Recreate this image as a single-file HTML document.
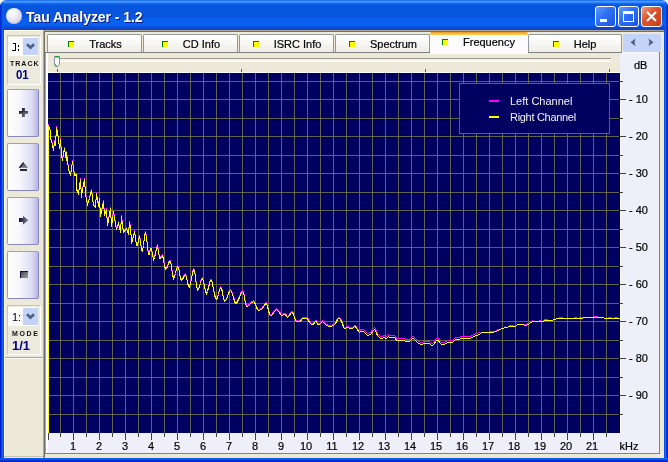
<!DOCTYPE html>
<html><head><meta charset="utf-8"><style>
*{box-sizing:border-box}
html,body{margin:0;padding:0;width:668px;height:462px;overflow:hidden;background:#fff;font-family:"Liberation Sans", sans-serif}
.a{position:absolute}
#title{position:absolute;left:0;top:0;width:668px;height:30px;border-radius:6px 6px 0 0;
background:linear-gradient(180deg,#0a5ae6 0px,#3d95ff 1px,#4f9dff 2px,#1f74f6 3px,#0a5fe8 4px,#0855dd 6px,#0855dd 16px,#0860f0 20px,#0862f4 25px,#0a4fd8 27px,#0a48d0 28px,#1640c8 29px,#1640c8 30px)}
#ttext{position:absolute;left:26px;top:9px;font-weight:bold;font-size:14px;line-height:16px;color:#fff;text-shadow:1px 1px 0 #0a1883;letter-spacing:-0.05px;white-space:nowrap}
#ticon{position:absolute;left:6px;top:8px;width:16px;height:16px;border-radius:50%;background:radial-gradient(circle at 40% 35%,#ffffff 0%,#eeeef8 35%,#c8c8dc 80%,#9ea4c8 100%)}
.tb{position:absolute;top:6px;width:21px;height:21px;border:1px solid #fff;border-radius:3px;background:linear-gradient(135deg,#5a9cff 0%,#2f6ef2 45%,#1c55e0 100%)}
#bclose{background:linear-gradient(135deg,#f0a080 0%,#e0562c 40%,#c83a1a 100%)}
.lb{position:absolute;top:30px;height:432px;width:4px;background:linear-gradient(90deg,#0020d0 0,#0020d0 1px,#0838e0 1px,#0838e0 2px,#1f62f0 2px,#1f62f0 3px,#0852e8 3px)}
#client{position:absolute;left:4px;top:30px;width:660px;height:428px;background:#ece9d8}
.panel{position:absolute;left:7px;width:34px;border:1px solid #c9c5b3;border-right-color:#fff;border-bottom-color:#fff;background:#eceadc}
.combo{position:absolute;left:8px;width:30px;height:19px;background:#fff}
.dd{position:absolute;left:15px;top:1px;width:15px;height:17px;background:#c4d3fa}
.small{position:absolute;font-weight:bold;font-size:7px;line-height:7px;color:#111;letter-spacing:0.9px;white-space:nowrap}
.big{position:absolute;font-weight:bold;font-size:13px;line-height:14px;color:#000080;white-space:nowrap;transform:scaleX(0.88);transform-origin:0 0}
.pb{position:absolute;left:7px;width:32px;height:48px;border:1px solid #9aa2bc;border-right-color:#8484c0;border-bottom-color:#8888b8;border-radius:2px;background:linear-gradient(90deg,#ffffff 0%,#f6f6fc 40%,#dcdcf4 80%,#c4c4e8 92%,#b8b8e0 100%)}
.tab{position:absolute;top:34px;height:19px;border:1px solid #919b9c;border-bottom:none;border-radius:2px 2px 0 0;background:linear-gradient(180deg,#ffffff 0%,#f8f8f5 40%,#ecebe5 100%);display:flex;justify-content:center;align-items:center;padding-top:0px;font-size:11px;color:#000}
.tab.sel{top:32px;height:22px;border:none;background:linear-gradient(180deg,#e8902c 0px,#f8b038 1px,#ffc83c 2px,#ffd050 3px,#fcfcfe 3px);padding-top:3px;padding-bottom:5px;padding-right:2px;z-index:2}
.tab.help{padding-right:2px}
.tab span{display:block;line-height:13px;-webkit-text-stroke:0.2px #000}
.ti{position:relative;left:1px;width:6px;height:6px;border-left:1px solid #008000;border-top:1px solid #008000;background:#ffff00;margin-right:16px}
.xl{position:absolute;top:440px;width:30px;text-align:center;font-size:11px;line-height:12px;color:#000;-webkit-text-stroke:0.2px #000}
.yl{position:absolute;left:629px;font-size:11px;line-height:14px;color:#000;white-space:nowrap;-webkit-text-stroke:0.2px #000}
.leg{position:absolute;left:510px;font-size:11px;line-height:12px;color:#f4f4f4;white-space:nowrap}
</style></head><body><div id="root" style="position:absolute;left:0;top:0;width:668px;height:462px;will-change:transform">
<div id="title"></div>
<div class="a" style="left:0;top:5px;width:4px;height:25px;background:linear-gradient(90deg,#0028c8 0,#0030d8 1px,#0a50e8 2px,#1060f0 3px,rgba(16,96,240,0) 4px)"></div>
<div class="a" style="left:664px;top:5px;width:4px;height:25px;background:linear-gradient(270deg,#0020b8 0,#0030d0 1px,#0a50e8 2px,#1060f0 3px,rgba(16,96,240,0) 4px)"></div>
<div id="ticon"></div>
<div id="ttext">Tau Analyzer - 1.2</div>
<div class="tb" style="left:595px"><div class="a" style="left:4px;top:12px;width:7px;height:3px;background:#fff"></div></div>
<div class="tb" style="left:618px"><div class="a" style="left:4px;top:4px;width:11px;height:11px;border:1px solid #fff;border-top-width:3px"></div></div>
<div class="tb" id="bclose" style="left:641px"><svg class="a" style="left:4px;top:4px" width="11" height="11"><path d="M1 1 L10 10 M10 1 L1 10" stroke="#fff" stroke-width="2"/></svg></div>
<div class="lb" style="left:0"></div>
<div class="lb" style="left:664px;transform:scaleX(-1)"></div>
<div class="a" style="left:0;top:458px;width:668px;height:4px;background:linear-gradient(180deg,#0852e8,#1f62f0 25%,#0838e0 50%,#0020d0 100%)"></div>
<div id="client"></div>
<!-- left panel -->
<div class="panel" style="top:35px;height:50px"></div>
<div class="combo" style="top:37px"><div class="dd"><svg class="a" style="left:3px;top:5px" width="9" height="7"><path d="M1 1.2 L4.5 4.7 L8 1.2" stroke="#4d6185" stroke-width="2.7" fill="none"/></svg></div></div>
<div class="a" style="left:13px;top:43px;width:3px;height:1px;background:#000"></div><div class="a" style="left:15px;top:43px;width:1px;height:8px;background:#000"></div><div class="a" style="left:12px;top:50px;width:4px;height:1px;background:#000"></div><div class="a" style="left:18px;top:45px;width:1px;height:2px;background:#000"></div><div class="a" style="left:18px;top:49px;width:1px;height:2px;background:#000"></div>
<div class="small" style="left:10px;top:60px;letter-spacing:1.0px">TRACK</div>
<div class="big" style="left:16px;top:68px">01</div>
<div class="pb" style="top:89px"><svg class="a" style="left:11px;top:18px" width="10" height="10" shape-rendering="crispEdges"><defs><linearGradient id="gi" x1="0" y1="0" x2="1" y2="1"><stop offset="0" stop-color="#101030"/><stop offset="1" stop-color="#808080"/></linearGradient></defs><rect x="3" y="0" width="3" height="9" fill="url(#gi)"/><rect x="0" y="3" width="9" height="3" fill="url(#gi)"/></svg></div>
<div class="pb" style="top:143px"><svg class="a" style="left:11px;top:18px" width="10" height="10"><polygon points="0,5.8 4.5,0.3 9,5.8" fill="#6a6a6a"/><path d="M0.3,5.8 L4.5,0.6" stroke="#101030" stroke-width="1.3"/><rect x="1" y="7" width="7" height="2" fill="#2a2a2a"/></svg></div>
<div class="pb" style="top:197px"><svg class="a" style="left:11px;top:18px" width="10" height="10"><defs><linearGradient id="ga" x1="0" y1="0" x2="1" y2="0"><stop offset="0" stop-color="#0a0a40"/><stop offset="1" stop-color="#8a8a8a"/></linearGradient></defs><polygon points="0,2 4,2 4,0 9.5,4.2 4,8.5 4,6 0,6" fill="url(#ga)"/></svg></div>
<div class="pb" style="top:251px"><svg class="a" style="left:12px;top:19px" width="8" height="7" shape-rendering="crispEdges"><defs><linearGradient id="gs" x1="0" y1="0" x2="1" y2="1"><stop offset="0" stop-color="#404040"/><stop offset="1" stop-color="#a0a0a0"/></linearGradient></defs><rect x="0" y="0" width="8" height="7" fill="url(#gs)"/><rect x="0" y="0" width="8" height="1" fill="#101040"/><rect x="0" y="0" width="1" height="7" fill="#101040"/></svg></div>
<div class="panel" style="top:305px;height:50px"></div>
<div class="a" style="left:4px;top:357px;width:39px;height:1px;background:#aca899"></div>
<div class="a" style="left:4px;top:358px;width:39px;height:1px;background:#fbfaf4"></div>
<div class="combo" style="top:307px"><div class="dd"><svg class="a" style="left:3px;top:5px" width="9" height="7"><path d="M1 1.2 L4.5 4.7 L8 1.2" stroke="#4d6185" stroke-width="2.7" fill="none"/></svg></div></div>
<div class="a" style="left:12px;top:311px;font-size:11px;line-height:13px;color:#000">1:</div>
<div class="small" style="left:12px;top:330px;letter-spacing:1.6px">MODE</div>
<div class="big" style="left:12px;top:339px;transform:scaleX(1.0)">1/1</div>
<!-- right container edges -->
<div class="a" style="left:4px;top:30px;width:39px;height:1px;background:#fffdf6"></div>
<div class="a" style="left:4px;top:30px;width:1px;height:427px;background:#fff8ea"></div>
<div class="a" style="left:4px;top:456px;width:39px;height:1px;background:#c8c4b0"></div>
<div class="a" style="left:43px;top:30px;width:621px;height:1px;background:#aca899"></div>
<div class="a" style="left:44px;top:31px;width:620px;height:1px;background:#716f64"></div>
<div class="a" style="left:43px;top:30px;width:1px;height:428px;background:#aca899"></div>
<div class="a" style="left:44px;top:31px;width:1px;height:427px;background:#716f64"></div>
<!-- tabs -->
<div class="tab" style="left:47px;width:95px"><div class="ti"></div><span>Tracks</span></div>
<div class="tab" style="left:143px;width:95px"><div class="ti"></div><span>CD Info</span></div>
<div class="tab" style="left:239px;width:95px"><div class="ti"></div><span>ISRC Info</span></div>
<div class="tab" style="left:335px;width:95px"><div class="ti"></div><span>Spectrum</span></div>
<div class="tab help" style="left:528px;width:94px"><div class="ti"></div><span>Help</span></div>
<div class="tab sel" style="left:430px;width:98px"><div class="ti"></div><span>Frequency</span></div>
<!-- page -->
<div class="a" style="left:44px;top:52px;width:616px;height:402px;background:#efeff9;border:1px solid #808080;border-left:1px solid #6e6e6e"></div>
<div class="a" style="left:45px;top:53px;width:1px;height:400px;background:#a4a4a8"></div>
<div class="a" style="left:46px;top:53px;width:2px;height:400px;background:#fff"></div>
<div class="a" style="left:48px;top:53px;width:572px;height:19px;background:#ece9d8"></div>
<div class="a" style="left:48px;top:72px;width:572px;height:1px;background:#fff"></div>
<div class="a" style="left:623px;top:34px;width:38px;height:18px;background:#c4d3fa;border-radius:2px"></div>
<div class="a" style="left:622px;top:52px;width:37px;height:1px;background:#f6f6fc"></div>
<div class="a" style="left:60px;top:58px;width:551px;height:1px;background:#9d9a8c"></div>
<div class="a" style="left:60px;top:59px;width:551px;height:2px;background:#f4f3ee"></div>
<div class="a" style="left:60px;top:61px;width:551px;height:1px;background:#ffffff"></div>
<svg class="a" style="left:54px;top:56px" width="6" height="12"><polygon points="0.5,0.5 5.5,0.5 5.5,8.5 3,11 0.5,8.5" fill="#fcfcfe" stroke="#8a8aa0" stroke-width="1"/><rect x="1" y="0" width="4" height="1.5" fill="#21a121"/><path d="M0.8,8.5 L2.5,10.5" stroke="#21a121" stroke-width="1.2"/></svg>
<div class="a" style="left:57px;top:69px;width:1px;height:3px;background:#606060"></div>
<div class="a" style="left:609px;top:69px;width:1px;height:3px;background:#606060"></div>
<div class="a" style="left:241px;top:69px;width:1px;height:3px;background:#606060"></div>
<div class="a" style="left:425px;top:69px;width:1px;height:3px;background:#606060"></div>
<svg class="a" style="left:623px;top:34px" width="38" height="18"><polygon points="12.5,4.5 7.5,8.3 12.5,12.2 11.5,8.3" fill="#4d6185"/><polygon points="25.5,4.5 30.5,8.3 25.5,12.2 26.5,8.3" fill="#4d6185"/></svg>
<svg width="668" height="462" style="position:absolute;left:0;top:0" shape-rendering="crispEdges">
<rect x="48" y="73" width="572" height="360" fill="#000060"/>
<rect x="60" y="73" width="1" height="360" fill="#626250"/>
<rect x="73" y="73" width="1" height="360" fill="#626250"/>
<rect x="86" y="73" width="1" height="360" fill="#626250"/>
<rect x="99" y="73" width="1" height="360" fill="#626250"/>
<rect x="112" y="73" width="1" height="360" fill="#626250"/>
<rect x="125" y="73" width="1" height="360" fill="#626250"/>
<rect x="138" y="73" width="1" height="360" fill="#626250"/>
<rect x="151" y="73" width="1" height="360" fill="#626250"/>
<rect x="164" y="73" width="1" height="360" fill="#626250"/>
<rect x="177" y="73" width="1" height="360" fill="#626250"/>
<rect x="190" y="73" width="1" height="360" fill="#626250"/>
<rect x="203" y="73" width="1" height="360" fill="#626250"/>
<rect x="216" y="73" width="1" height="360" fill="#626250"/>
<rect x="229" y="73" width="1" height="360" fill="#626250"/>
<rect x="242" y="73" width="1" height="360" fill="#626250"/>
<rect x="255" y="73" width="1" height="360" fill="#626250"/>
<rect x="268" y="73" width="1" height="360" fill="#626250"/>
<rect x="281" y="73" width="1" height="360" fill="#626250"/>
<rect x="294" y="73" width="1" height="360" fill="#626250"/>
<rect x="307" y="73" width="1" height="360" fill="#626250"/>
<rect x="320" y="73" width="1" height="360" fill="#626250"/>
<rect x="333" y="73" width="1" height="360" fill="#626250"/>
<rect x="346" y="73" width="1" height="360" fill="#626250"/>
<rect x="359" y="73" width="1" height="360" fill="#626250"/>
<rect x="372" y="73" width="1" height="360" fill="#626250"/>
<rect x="385" y="73" width="1" height="360" fill="#626250"/>
<rect x="398" y="73" width="1" height="360" fill="#626250"/>
<rect x="411" y="73" width="1" height="360" fill="#626250"/>
<rect x="424" y="73" width="1" height="360" fill="#626250"/>
<rect x="437" y="73" width="1" height="360" fill="#626250"/>
<rect x="450" y="73" width="1" height="360" fill="#626250"/>
<rect x="463" y="73" width="1" height="360" fill="#626250"/>
<rect x="476" y="73" width="1" height="360" fill="#626250"/>
<rect x="489" y="73" width="1" height="360" fill="#626250"/>
<rect x="502" y="73" width="1" height="360" fill="#626250"/>
<rect x="515" y="73" width="1" height="360" fill="#626250"/>
<rect x="528" y="73" width="1" height="360" fill="#626250"/>
<rect x="541" y="73" width="1" height="360" fill="#626250"/>
<rect x="554" y="73" width="1" height="360" fill="#626250"/>
<rect x="567" y="73" width="1" height="360" fill="#626250"/>
<rect x="580" y="73" width="1" height="360" fill="#626250"/>
<rect x="593" y="73" width="1" height="360" fill="#626250"/>
<rect x="606" y="73" width="1" height="360" fill="#626250"/>
<rect x="48" y="81" width="572" height="1" fill="#626250"/>
<rect x="48" y="99" width="572" height="1" fill="#626250"/>
<rect x="48" y="118" width="572" height="1" fill="#626250"/>
<rect x="48" y="136" width="572" height="1" fill="#626250"/>
<rect x="48" y="155" width="572" height="1" fill="#626250"/>
<rect x="48" y="173" width="572" height="1" fill="#626250"/>
<rect x="48" y="192" width="572" height="1" fill="#626250"/>
<rect x="48" y="210" width="572" height="1" fill="#626250"/>
<rect x="48" y="229" width="572" height="1" fill="#626250"/>
<rect x="48" y="247" width="572" height="1" fill="#626250"/>
<rect x="48" y="266" width="572" height="1" fill="#626250"/>
<rect x="48" y="284" width="572" height="1" fill="#626250"/>
<rect x="48" y="303" width="572" height="1" fill="#626250"/>
<rect x="48" y="321" width="572" height="1" fill="#626250"/>
<rect x="48" y="340" width="572" height="1" fill="#626250"/>
<rect x="48" y="358" width="572" height="1" fill="#626250"/>
<rect x="48" y="377" width="572" height="1" fill="#626250"/>
<rect x="48" y="395" width="572" height="1" fill="#626250"/>
<rect x="48" y="414" width="572" height="1" fill="#626250"/>
<rect x="60" y="81" width="1" height="1" fill="#727842"/>
<rect x="60" y="99" width="1" height="1" fill="#727842"/>
<rect x="60" y="118" width="1" height="1" fill="#727842"/>
<rect x="60" y="136" width="1" height="1" fill="#727842"/>
<rect x="60" y="155" width="1" height="1" fill="#727842"/>
<rect x="60" y="173" width="1" height="1" fill="#727842"/>
<rect x="60" y="192" width="1" height="1" fill="#727842"/>
<rect x="60" y="210" width="1" height="1" fill="#727842"/>
<rect x="60" y="229" width="1" height="1" fill="#727842"/>
<rect x="60" y="247" width="1" height="1" fill="#727842"/>
<rect x="60" y="266" width="1" height="1" fill="#727842"/>
<rect x="60" y="284" width="1" height="1" fill="#727842"/>
<rect x="60" y="303" width="1" height="1" fill="#727842"/>
<rect x="60" y="321" width="1" height="1" fill="#727842"/>
<rect x="60" y="340" width="1" height="1" fill="#727842"/>
<rect x="60" y="358" width="1" height="1" fill="#727842"/>
<rect x="60" y="377" width="1" height="1" fill="#727842"/>
<rect x="60" y="395" width="1" height="1" fill="#727842"/>
<rect x="60" y="414" width="1" height="1" fill="#727842"/>
<rect x="73" y="81" width="1" height="1" fill="#727842"/>
<rect x="73" y="99" width="1" height="1" fill="#727842"/>
<rect x="73" y="118" width="1" height="1" fill="#727842"/>
<rect x="73" y="136" width="1" height="1" fill="#727842"/>
<rect x="73" y="155" width="1" height="1" fill="#727842"/>
<rect x="73" y="173" width="1" height="1" fill="#727842"/>
<rect x="73" y="192" width="1" height="1" fill="#727842"/>
<rect x="73" y="210" width="1" height="1" fill="#727842"/>
<rect x="73" y="229" width="1" height="1" fill="#727842"/>
<rect x="73" y="247" width="1" height="1" fill="#727842"/>
<rect x="73" y="266" width="1" height="1" fill="#727842"/>
<rect x="73" y="284" width="1" height="1" fill="#727842"/>
<rect x="73" y="303" width="1" height="1" fill="#727842"/>
<rect x="73" y="321" width="1" height="1" fill="#727842"/>
<rect x="73" y="340" width="1" height="1" fill="#727842"/>
<rect x="73" y="358" width="1" height="1" fill="#727842"/>
<rect x="73" y="377" width="1" height="1" fill="#727842"/>
<rect x="73" y="395" width="1" height="1" fill="#727842"/>
<rect x="73" y="414" width="1" height="1" fill="#727842"/>
<rect x="86" y="81" width="1" height="1" fill="#727842"/>
<rect x="86" y="99" width="1" height="1" fill="#727842"/>
<rect x="86" y="118" width="1" height="1" fill="#727842"/>
<rect x="86" y="136" width="1" height="1" fill="#727842"/>
<rect x="86" y="155" width="1" height="1" fill="#727842"/>
<rect x="86" y="173" width="1" height="1" fill="#727842"/>
<rect x="86" y="192" width="1" height="1" fill="#727842"/>
<rect x="86" y="210" width="1" height="1" fill="#727842"/>
<rect x="86" y="229" width="1" height="1" fill="#727842"/>
<rect x="86" y="247" width="1" height="1" fill="#727842"/>
<rect x="86" y="266" width="1" height="1" fill="#727842"/>
<rect x="86" y="284" width="1" height="1" fill="#727842"/>
<rect x="86" y="303" width="1" height="1" fill="#727842"/>
<rect x="86" y="321" width="1" height="1" fill="#727842"/>
<rect x="86" y="340" width="1" height="1" fill="#727842"/>
<rect x="86" y="358" width="1" height="1" fill="#727842"/>
<rect x="86" y="377" width="1" height="1" fill="#727842"/>
<rect x="86" y="395" width="1" height="1" fill="#727842"/>
<rect x="86" y="414" width="1" height="1" fill="#727842"/>
<rect x="99" y="81" width="1" height="1" fill="#727842"/>
<rect x="99" y="99" width="1" height="1" fill="#727842"/>
<rect x="99" y="118" width="1" height="1" fill="#727842"/>
<rect x="99" y="136" width="1" height="1" fill="#727842"/>
<rect x="99" y="155" width="1" height="1" fill="#727842"/>
<rect x="99" y="173" width="1" height="1" fill="#727842"/>
<rect x="99" y="192" width="1" height="1" fill="#727842"/>
<rect x="99" y="210" width="1" height="1" fill="#727842"/>
<rect x="99" y="229" width="1" height="1" fill="#727842"/>
<rect x="99" y="247" width="1" height="1" fill="#727842"/>
<rect x="99" y="266" width="1" height="1" fill="#727842"/>
<rect x="99" y="284" width="1" height="1" fill="#727842"/>
<rect x="99" y="303" width="1" height="1" fill="#727842"/>
<rect x="99" y="321" width="1" height="1" fill="#727842"/>
<rect x="99" y="340" width="1" height="1" fill="#727842"/>
<rect x="99" y="358" width="1" height="1" fill="#727842"/>
<rect x="99" y="377" width="1" height="1" fill="#727842"/>
<rect x="99" y="395" width="1" height="1" fill="#727842"/>
<rect x="99" y="414" width="1" height="1" fill="#727842"/>
<rect x="112" y="81" width="1" height="1" fill="#727842"/>
<rect x="112" y="99" width="1" height="1" fill="#727842"/>
<rect x="112" y="118" width="1" height="1" fill="#727842"/>
<rect x="112" y="136" width="1" height="1" fill="#727842"/>
<rect x="112" y="155" width="1" height="1" fill="#727842"/>
<rect x="112" y="173" width="1" height="1" fill="#727842"/>
<rect x="112" y="192" width="1" height="1" fill="#727842"/>
<rect x="112" y="210" width="1" height="1" fill="#727842"/>
<rect x="112" y="229" width="1" height="1" fill="#727842"/>
<rect x="112" y="247" width="1" height="1" fill="#727842"/>
<rect x="112" y="266" width="1" height="1" fill="#727842"/>
<rect x="112" y="284" width="1" height="1" fill="#727842"/>
<rect x="112" y="303" width="1" height="1" fill="#727842"/>
<rect x="112" y="321" width="1" height="1" fill="#727842"/>
<rect x="112" y="340" width="1" height="1" fill="#727842"/>
<rect x="112" y="358" width="1" height="1" fill="#727842"/>
<rect x="112" y="377" width="1" height="1" fill="#727842"/>
<rect x="112" y="395" width="1" height="1" fill="#727842"/>
<rect x="112" y="414" width="1" height="1" fill="#727842"/>
<rect x="125" y="81" width="1" height="1" fill="#727842"/>
<rect x="125" y="99" width="1" height="1" fill="#727842"/>
<rect x="125" y="118" width="1" height="1" fill="#727842"/>
<rect x="125" y="136" width="1" height="1" fill="#727842"/>
<rect x="125" y="155" width="1" height="1" fill="#727842"/>
<rect x="125" y="173" width="1" height="1" fill="#727842"/>
<rect x="125" y="192" width="1" height="1" fill="#727842"/>
<rect x="125" y="210" width="1" height="1" fill="#727842"/>
<rect x="125" y="229" width="1" height="1" fill="#727842"/>
<rect x="125" y="247" width="1" height="1" fill="#727842"/>
<rect x="125" y="266" width="1" height="1" fill="#727842"/>
<rect x="125" y="284" width="1" height="1" fill="#727842"/>
<rect x="125" y="303" width="1" height="1" fill="#727842"/>
<rect x="125" y="321" width="1" height="1" fill="#727842"/>
<rect x="125" y="340" width="1" height="1" fill="#727842"/>
<rect x="125" y="358" width="1" height="1" fill="#727842"/>
<rect x="125" y="377" width="1" height="1" fill="#727842"/>
<rect x="125" y="395" width="1" height="1" fill="#727842"/>
<rect x="125" y="414" width="1" height="1" fill="#727842"/>
<rect x="138" y="81" width="1" height="1" fill="#727842"/>
<rect x="138" y="99" width="1" height="1" fill="#727842"/>
<rect x="138" y="118" width="1" height="1" fill="#727842"/>
<rect x="138" y="136" width="1" height="1" fill="#727842"/>
<rect x="138" y="155" width="1" height="1" fill="#727842"/>
<rect x="138" y="173" width="1" height="1" fill="#727842"/>
<rect x="138" y="192" width="1" height="1" fill="#727842"/>
<rect x="138" y="210" width="1" height="1" fill="#727842"/>
<rect x="138" y="229" width="1" height="1" fill="#727842"/>
<rect x="138" y="247" width="1" height="1" fill="#727842"/>
<rect x="138" y="266" width="1" height="1" fill="#727842"/>
<rect x="138" y="284" width="1" height="1" fill="#727842"/>
<rect x="138" y="303" width="1" height="1" fill="#727842"/>
<rect x="138" y="321" width="1" height="1" fill="#727842"/>
<rect x="138" y="340" width="1" height="1" fill="#727842"/>
<rect x="138" y="358" width="1" height="1" fill="#727842"/>
<rect x="138" y="377" width="1" height="1" fill="#727842"/>
<rect x="138" y="395" width="1" height="1" fill="#727842"/>
<rect x="138" y="414" width="1" height="1" fill="#727842"/>
<rect x="151" y="81" width="1" height="1" fill="#727842"/>
<rect x="151" y="99" width="1" height="1" fill="#727842"/>
<rect x="151" y="118" width="1" height="1" fill="#727842"/>
<rect x="151" y="136" width="1" height="1" fill="#727842"/>
<rect x="151" y="155" width="1" height="1" fill="#727842"/>
<rect x="151" y="173" width="1" height="1" fill="#727842"/>
<rect x="151" y="192" width="1" height="1" fill="#727842"/>
<rect x="151" y="210" width="1" height="1" fill="#727842"/>
<rect x="151" y="229" width="1" height="1" fill="#727842"/>
<rect x="151" y="247" width="1" height="1" fill="#727842"/>
<rect x="151" y="266" width="1" height="1" fill="#727842"/>
<rect x="151" y="284" width="1" height="1" fill="#727842"/>
<rect x="151" y="303" width="1" height="1" fill="#727842"/>
<rect x="151" y="321" width="1" height="1" fill="#727842"/>
<rect x="151" y="340" width="1" height="1" fill="#727842"/>
<rect x="151" y="358" width="1" height="1" fill="#727842"/>
<rect x="151" y="377" width="1" height="1" fill="#727842"/>
<rect x="151" y="395" width="1" height="1" fill="#727842"/>
<rect x="151" y="414" width="1" height="1" fill="#727842"/>
<rect x="164" y="81" width="1" height="1" fill="#727842"/>
<rect x="164" y="99" width="1" height="1" fill="#727842"/>
<rect x="164" y="118" width="1" height="1" fill="#727842"/>
<rect x="164" y="136" width="1" height="1" fill="#727842"/>
<rect x="164" y="155" width="1" height="1" fill="#727842"/>
<rect x="164" y="173" width="1" height="1" fill="#727842"/>
<rect x="164" y="192" width="1" height="1" fill="#727842"/>
<rect x="164" y="210" width="1" height="1" fill="#727842"/>
<rect x="164" y="229" width="1" height="1" fill="#727842"/>
<rect x="164" y="247" width="1" height="1" fill="#727842"/>
<rect x="164" y="266" width="1" height="1" fill="#727842"/>
<rect x="164" y="284" width="1" height="1" fill="#727842"/>
<rect x="164" y="303" width="1" height="1" fill="#727842"/>
<rect x="164" y="321" width="1" height="1" fill="#727842"/>
<rect x="164" y="340" width="1" height="1" fill="#727842"/>
<rect x="164" y="358" width="1" height="1" fill="#727842"/>
<rect x="164" y="377" width="1" height="1" fill="#727842"/>
<rect x="164" y="395" width="1" height="1" fill="#727842"/>
<rect x="164" y="414" width="1" height="1" fill="#727842"/>
<rect x="177" y="81" width="1" height="1" fill="#727842"/>
<rect x="177" y="99" width="1" height="1" fill="#727842"/>
<rect x="177" y="118" width="1" height="1" fill="#727842"/>
<rect x="177" y="136" width="1" height="1" fill="#727842"/>
<rect x="177" y="155" width="1" height="1" fill="#727842"/>
<rect x="177" y="173" width="1" height="1" fill="#727842"/>
<rect x="177" y="192" width="1" height="1" fill="#727842"/>
<rect x="177" y="210" width="1" height="1" fill="#727842"/>
<rect x="177" y="229" width="1" height="1" fill="#727842"/>
<rect x="177" y="247" width="1" height="1" fill="#727842"/>
<rect x="177" y="266" width="1" height="1" fill="#727842"/>
<rect x="177" y="284" width="1" height="1" fill="#727842"/>
<rect x="177" y="303" width="1" height="1" fill="#727842"/>
<rect x="177" y="321" width="1" height="1" fill="#727842"/>
<rect x="177" y="340" width="1" height="1" fill="#727842"/>
<rect x="177" y="358" width="1" height="1" fill="#727842"/>
<rect x="177" y="377" width="1" height="1" fill="#727842"/>
<rect x="177" y="395" width="1" height="1" fill="#727842"/>
<rect x="177" y="414" width="1" height="1" fill="#727842"/>
<rect x="190" y="81" width="1" height="1" fill="#727842"/>
<rect x="190" y="99" width="1" height="1" fill="#727842"/>
<rect x="190" y="118" width="1" height="1" fill="#727842"/>
<rect x="190" y="136" width="1" height="1" fill="#727842"/>
<rect x="190" y="155" width="1" height="1" fill="#727842"/>
<rect x="190" y="173" width="1" height="1" fill="#727842"/>
<rect x="190" y="192" width="1" height="1" fill="#727842"/>
<rect x="190" y="210" width="1" height="1" fill="#727842"/>
<rect x="190" y="229" width="1" height="1" fill="#727842"/>
<rect x="190" y="247" width="1" height="1" fill="#727842"/>
<rect x="190" y="266" width="1" height="1" fill="#727842"/>
<rect x="190" y="284" width="1" height="1" fill="#727842"/>
<rect x="190" y="303" width="1" height="1" fill="#727842"/>
<rect x="190" y="321" width="1" height="1" fill="#727842"/>
<rect x="190" y="340" width="1" height="1" fill="#727842"/>
<rect x="190" y="358" width="1" height="1" fill="#727842"/>
<rect x="190" y="377" width="1" height="1" fill="#727842"/>
<rect x="190" y="395" width="1" height="1" fill="#727842"/>
<rect x="190" y="414" width="1" height="1" fill="#727842"/>
<rect x="203" y="81" width="1" height="1" fill="#727842"/>
<rect x="203" y="99" width="1" height="1" fill="#727842"/>
<rect x="203" y="118" width="1" height="1" fill="#727842"/>
<rect x="203" y="136" width="1" height="1" fill="#727842"/>
<rect x="203" y="155" width="1" height="1" fill="#727842"/>
<rect x="203" y="173" width="1" height="1" fill="#727842"/>
<rect x="203" y="192" width="1" height="1" fill="#727842"/>
<rect x="203" y="210" width="1" height="1" fill="#727842"/>
<rect x="203" y="229" width="1" height="1" fill="#727842"/>
<rect x="203" y="247" width="1" height="1" fill="#727842"/>
<rect x="203" y="266" width="1" height="1" fill="#727842"/>
<rect x="203" y="284" width="1" height="1" fill="#727842"/>
<rect x="203" y="303" width="1" height="1" fill="#727842"/>
<rect x="203" y="321" width="1" height="1" fill="#727842"/>
<rect x="203" y="340" width="1" height="1" fill="#727842"/>
<rect x="203" y="358" width="1" height="1" fill="#727842"/>
<rect x="203" y="377" width="1" height="1" fill="#727842"/>
<rect x="203" y="395" width="1" height="1" fill="#727842"/>
<rect x="203" y="414" width="1" height="1" fill="#727842"/>
<rect x="216" y="81" width="1" height="1" fill="#727842"/>
<rect x="216" y="99" width="1" height="1" fill="#727842"/>
<rect x="216" y="118" width="1" height="1" fill="#727842"/>
<rect x="216" y="136" width="1" height="1" fill="#727842"/>
<rect x="216" y="155" width="1" height="1" fill="#727842"/>
<rect x="216" y="173" width="1" height="1" fill="#727842"/>
<rect x="216" y="192" width="1" height="1" fill="#727842"/>
<rect x="216" y="210" width="1" height="1" fill="#727842"/>
<rect x="216" y="229" width="1" height="1" fill="#727842"/>
<rect x="216" y="247" width="1" height="1" fill="#727842"/>
<rect x="216" y="266" width="1" height="1" fill="#727842"/>
<rect x="216" y="284" width="1" height="1" fill="#727842"/>
<rect x="216" y="303" width="1" height="1" fill="#727842"/>
<rect x="216" y="321" width="1" height="1" fill="#727842"/>
<rect x="216" y="340" width="1" height="1" fill="#727842"/>
<rect x="216" y="358" width="1" height="1" fill="#727842"/>
<rect x="216" y="377" width="1" height="1" fill="#727842"/>
<rect x="216" y="395" width="1" height="1" fill="#727842"/>
<rect x="216" y="414" width="1" height="1" fill="#727842"/>
<rect x="229" y="81" width="1" height="1" fill="#727842"/>
<rect x="229" y="99" width="1" height="1" fill="#727842"/>
<rect x="229" y="118" width="1" height="1" fill="#727842"/>
<rect x="229" y="136" width="1" height="1" fill="#727842"/>
<rect x="229" y="155" width="1" height="1" fill="#727842"/>
<rect x="229" y="173" width="1" height="1" fill="#727842"/>
<rect x="229" y="192" width="1" height="1" fill="#727842"/>
<rect x="229" y="210" width="1" height="1" fill="#727842"/>
<rect x="229" y="229" width="1" height="1" fill="#727842"/>
<rect x="229" y="247" width="1" height="1" fill="#727842"/>
<rect x="229" y="266" width="1" height="1" fill="#727842"/>
<rect x="229" y="284" width="1" height="1" fill="#727842"/>
<rect x="229" y="303" width="1" height="1" fill="#727842"/>
<rect x="229" y="321" width="1" height="1" fill="#727842"/>
<rect x="229" y="340" width="1" height="1" fill="#727842"/>
<rect x="229" y="358" width="1" height="1" fill="#727842"/>
<rect x="229" y="377" width="1" height="1" fill="#727842"/>
<rect x="229" y="395" width="1" height="1" fill="#727842"/>
<rect x="229" y="414" width="1" height="1" fill="#727842"/>
<rect x="242" y="81" width="1" height="1" fill="#727842"/>
<rect x="242" y="99" width="1" height="1" fill="#727842"/>
<rect x="242" y="118" width="1" height="1" fill="#727842"/>
<rect x="242" y="136" width="1" height="1" fill="#727842"/>
<rect x="242" y="155" width="1" height="1" fill="#727842"/>
<rect x="242" y="173" width="1" height="1" fill="#727842"/>
<rect x="242" y="192" width="1" height="1" fill="#727842"/>
<rect x="242" y="210" width="1" height="1" fill="#727842"/>
<rect x="242" y="229" width="1" height="1" fill="#727842"/>
<rect x="242" y="247" width="1" height="1" fill="#727842"/>
<rect x="242" y="266" width="1" height="1" fill="#727842"/>
<rect x="242" y="284" width="1" height="1" fill="#727842"/>
<rect x="242" y="303" width="1" height="1" fill="#727842"/>
<rect x="242" y="321" width="1" height="1" fill="#727842"/>
<rect x="242" y="340" width="1" height="1" fill="#727842"/>
<rect x="242" y="358" width="1" height="1" fill="#727842"/>
<rect x="242" y="377" width="1" height="1" fill="#727842"/>
<rect x="242" y="395" width="1" height="1" fill="#727842"/>
<rect x="242" y="414" width="1" height="1" fill="#727842"/>
<rect x="255" y="81" width="1" height="1" fill="#727842"/>
<rect x="255" y="99" width="1" height="1" fill="#727842"/>
<rect x="255" y="118" width="1" height="1" fill="#727842"/>
<rect x="255" y="136" width="1" height="1" fill="#727842"/>
<rect x="255" y="155" width="1" height="1" fill="#727842"/>
<rect x="255" y="173" width="1" height="1" fill="#727842"/>
<rect x="255" y="192" width="1" height="1" fill="#727842"/>
<rect x="255" y="210" width="1" height="1" fill="#727842"/>
<rect x="255" y="229" width="1" height="1" fill="#727842"/>
<rect x="255" y="247" width="1" height="1" fill="#727842"/>
<rect x="255" y="266" width="1" height="1" fill="#727842"/>
<rect x="255" y="284" width="1" height="1" fill="#727842"/>
<rect x="255" y="303" width="1" height="1" fill="#727842"/>
<rect x="255" y="321" width="1" height="1" fill="#727842"/>
<rect x="255" y="340" width="1" height="1" fill="#727842"/>
<rect x="255" y="358" width="1" height="1" fill="#727842"/>
<rect x="255" y="377" width="1" height="1" fill="#727842"/>
<rect x="255" y="395" width="1" height="1" fill="#727842"/>
<rect x="255" y="414" width="1" height="1" fill="#727842"/>
<rect x="268" y="81" width="1" height="1" fill="#727842"/>
<rect x="268" y="99" width="1" height="1" fill="#727842"/>
<rect x="268" y="118" width="1" height="1" fill="#727842"/>
<rect x="268" y="136" width="1" height="1" fill="#727842"/>
<rect x="268" y="155" width="1" height="1" fill="#727842"/>
<rect x="268" y="173" width="1" height="1" fill="#727842"/>
<rect x="268" y="192" width="1" height="1" fill="#727842"/>
<rect x="268" y="210" width="1" height="1" fill="#727842"/>
<rect x="268" y="229" width="1" height="1" fill="#727842"/>
<rect x="268" y="247" width="1" height="1" fill="#727842"/>
<rect x="268" y="266" width="1" height="1" fill="#727842"/>
<rect x="268" y="284" width="1" height="1" fill="#727842"/>
<rect x="268" y="303" width="1" height="1" fill="#727842"/>
<rect x="268" y="321" width="1" height="1" fill="#727842"/>
<rect x="268" y="340" width="1" height="1" fill="#727842"/>
<rect x="268" y="358" width="1" height="1" fill="#727842"/>
<rect x="268" y="377" width="1" height="1" fill="#727842"/>
<rect x="268" y="395" width="1" height="1" fill="#727842"/>
<rect x="268" y="414" width="1" height="1" fill="#727842"/>
<rect x="281" y="81" width="1" height="1" fill="#727842"/>
<rect x="281" y="99" width="1" height="1" fill="#727842"/>
<rect x="281" y="118" width="1" height="1" fill="#727842"/>
<rect x="281" y="136" width="1" height="1" fill="#727842"/>
<rect x="281" y="155" width="1" height="1" fill="#727842"/>
<rect x="281" y="173" width="1" height="1" fill="#727842"/>
<rect x="281" y="192" width="1" height="1" fill="#727842"/>
<rect x="281" y="210" width="1" height="1" fill="#727842"/>
<rect x="281" y="229" width="1" height="1" fill="#727842"/>
<rect x="281" y="247" width="1" height="1" fill="#727842"/>
<rect x="281" y="266" width="1" height="1" fill="#727842"/>
<rect x="281" y="284" width="1" height="1" fill="#727842"/>
<rect x="281" y="303" width="1" height="1" fill="#727842"/>
<rect x="281" y="321" width="1" height="1" fill="#727842"/>
<rect x="281" y="340" width="1" height="1" fill="#727842"/>
<rect x="281" y="358" width="1" height="1" fill="#727842"/>
<rect x="281" y="377" width="1" height="1" fill="#727842"/>
<rect x="281" y="395" width="1" height="1" fill="#727842"/>
<rect x="281" y="414" width="1" height="1" fill="#727842"/>
<rect x="294" y="81" width="1" height="1" fill="#727842"/>
<rect x="294" y="99" width="1" height="1" fill="#727842"/>
<rect x="294" y="118" width="1" height="1" fill="#727842"/>
<rect x="294" y="136" width="1" height="1" fill="#727842"/>
<rect x="294" y="155" width="1" height="1" fill="#727842"/>
<rect x="294" y="173" width="1" height="1" fill="#727842"/>
<rect x="294" y="192" width="1" height="1" fill="#727842"/>
<rect x="294" y="210" width="1" height="1" fill="#727842"/>
<rect x="294" y="229" width="1" height="1" fill="#727842"/>
<rect x="294" y="247" width="1" height="1" fill="#727842"/>
<rect x="294" y="266" width="1" height="1" fill="#727842"/>
<rect x="294" y="284" width="1" height="1" fill="#727842"/>
<rect x="294" y="303" width="1" height="1" fill="#727842"/>
<rect x="294" y="321" width="1" height="1" fill="#727842"/>
<rect x="294" y="340" width="1" height="1" fill="#727842"/>
<rect x="294" y="358" width="1" height="1" fill="#727842"/>
<rect x="294" y="377" width="1" height="1" fill="#727842"/>
<rect x="294" y="395" width="1" height="1" fill="#727842"/>
<rect x="294" y="414" width="1" height="1" fill="#727842"/>
<rect x="307" y="81" width="1" height="1" fill="#727842"/>
<rect x="307" y="99" width="1" height="1" fill="#727842"/>
<rect x="307" y="118" width="1" height="1" fill="#727842"/>
<rect x="307" y="136" width="1" height="1" fill="#727842"/>
<rect x="307" y="155" width="1" height="1" fill="#727842"/>
<rect x="307" y="173" width="1" height="1" fill="#727842"/>
<rect x="307" y="192" width="1" height="1" fill="#727842"/>
<rect x="307" y="210" width="1" height="1" fill="#727842"/>
<rect x="307" y="229" width="1" height="1" fill="#727842"/>
<rect x="307" y="247" width="1" height="1" fill="#727842"/>
<rect x="307" y="266" width="1" height="1" fill="#727842"/>
<rect x="307" y="284" width="1" height="1" fill="#727842"/>
<rect x="307" y="303" width="1" height="1" fill="#727842"/>
<rect x="307" y="321" width="1" height="1" fill="#727842"/>
<rect x="307" y="340" width="1" height="1" fill="#727842"/>
<rect x="307" y="358" width="1" height="1" fill="#727842"/>
<rect x="307" y="377" width="1" height="1" fill="#727842"/>
<rect x="307" y="395" width="1" height="1" fill="#727842"/>
<rect x="307" y="414" width="1" height="1" fill="#727842"/>
<rect x="320" y="81" width="1" height="1" fill="#727842"/>
<rect x="320" y="99" width="1" height="1" fill="#727842"/>
<rect x="320" y="118" width="1" height="1" fill="#727842"/>
<rect x="320" y="136" width="1" height="1" fill="#727842"/>
<rect x="320" y="155" width="1" height="1" fill="#727842"/>
<rect x="320" y="173" width="1" height="1" fill="#727842"/>
<rect x="320" y="192" width="1" height="1" fill="#727842"/>
<rect x="320" y="210" width="1" height="1" fill="#727842"/>
<rect x="320" y="229" width="1" height="1" fill="#727842"/>
<rect x="320" y="247" width="1" height="1" fill="#727842"/>
<rect x="320" y="266" width="1" height="1" fill="#727842"/>
<rect x="320" y="284" width="1" height="1" fill="#727842"/>
<rect x="320" y="303" width="1" height="1" fill="#727842"/>
<rect x="320" y="321" width="1" height="1" fill="#727842"/>
<rect x="320" y="340" width="1" height="1" fill="#727842"/>
<rect x="320" y="358" width="1" height="1" fill="#727842"/>
<rect x="320" y="377" width="1" height="1" fill="#727842"/>
<rect x="320" y="395" width="1" height="1" fill="#727842"/>
<rect x="320" y="414" width="1" height="1" fill="#727842"/>
<rect x="333" y="81" width="1" height="1" fill="#727842"/>
<rect x="333" y="99" width="1" height="1" fill="#727842"/>
<rect x="333" y="118" width="1" height="1" fill="#727842"/>
<rect x="333" y="136" width="1" height="1" fill="#727842"/>
<rect x="333" y="155" width="1" height="1" fill="#727842"/>
<rect x="333" y="173" width="1" height="1" fill="#727842"/>
<rect x="333" y="192" width="1" height="1" fill="#727842"/>
<rect x="333" y="210" width="1" height="1" fill="#727842"/>
<rect x="333" y="229" width="1" height="1" fill="#727842"/>
<rect x="333" y="247" width="1" height="1" fill="#727842"/>
<rect x="333" y="266" width="1" height="1" fill="#727842"/>
<rect x="333" y="284" width="1" height="1" fill="#727842"/>
<rect x="333" y="303" width="1" height="1" fill="#727842"/>
<rect x="333" y="321" width="1" height="1" fill="#727842"/>
<rect x="333" y="340" width="1" height="1" fill="#727842"/>
<rect x="333" y="358" width="1" height="1" fill="#727842"/>
<rect x="333" y="377" width="1" height="1" fill="#727842"/>
<rect x="333" y="395" width="1" height="1" fill="#727842"/>
<rect x="333" y="414" width="1" height="1" fill="#727842"/>
<rect x="346" y="81" width="1" height="1" fill="#727842"/>
<rect x="346" y="99" width="1" height="1" fill="#727842"/>
<rect x="346" y="118" width="1" height="1" fill="#727842"/>
<rect x="346" y="136" width="1" height="1" fill="#727842"/>
<rect x="346" y="155" width="1" height="1" fill="#727842"/>
<rect x="346" y="173" width="1" height="1" fill="#727842"/>
<rect x="346" y="192" width="1" height="1" fill="#727842"/>
<rect x="346" y="210" width="1" height="1" fill="#727842"/>
<rect x="346" y="229" width="1" height="1" fill="#727842"/>
<rect x="346" y="247" width="1" height="1" fill="#727842"/>
<rect x="346" y="266" width="1" height="1" fill="#727842"/>
<rect x="346" y="284" width="1" height="1" fill="#727842"/>
<rect x="346" y="303" width="1" height="1" fill="#727842"/>
<rect x="346" y="321" width="1" height="1" fill="#727842"/>
<rect x="346" y="340" width="1" height="1" fill="#727842"/>
<rect x="346" y="358" width="1" height="1" fill="#727842"/>
<rect x="346" y="377" width="1" height="1" fill="#727842"/>
<rect x="346" y="395" width="1" height="1" fill="#727842"/>
<rect x="346" y="414" width="1" height="1" fill="#727842"/>
<rect x="359" y="81" width="1" height="1" fill="#727842"/>
<rect x="359" y="99" width="1" height="1" fill="#727842"/>
<rect x="359" y="118" width="1" height="1" fill="#727842"/>
<rect x="359" y="136" width="1" height="1" fill="#727842"/>
<rect x="359" y="155" width="1" height="1" fill="#727842"/>
<rect x="359" y="173" width="1" height="1" fill="#727842"/>
<rect x="359" y="192" width="1" height="1" fill="#727842"/>
<rect x="359" y="210" width="1" height="1" fill="#727842"/>
<rect x="359" y="229" width="1" height="1" fill="#727842"/>
<rect x="359" y="247" width="1" height="1" fill="#727842"/>
<rect x="359" y="266" width="1" height="1" fill="#727842"/>
<rect x="359" y="284" width="1" height="1" fill="#727842"/>
<rect x="359" y="303" width="1" height="1" fill="#727842"/>
<rect x="359" y="321" width="1" height="1" fill="#727842"/>
<rect x="359" y="340" width="1" height="1" fill="#727842"/>
<rect x="359" y="358" width="1" height="1" fill="#727842"/>
<rect x="359" y="377" width="1" height="1" fill="#727842"/>
<rect x="359" y="395" width="1" height="1" fill="#727842"/>
<rect x="359" y="414" width="1" height="1" fill="#727842"/>
<rect x="372" y="81" width="1" height="1" fill="#727842"/>
<rect x="372" y="99" width="1" height="1" fill="#727842"/>
<rect x="372" y="118" width="1" height="1" fill="#727842"/>
<rect x="372" y="136" width="1" height="1" fill="#727842"/>
<rect x="372" y="155" width="1" height="1" fill="#727842"/>
<rect x="372" y="173" width="1" height="1" fill="#727842"/>
<rect x="372" y="192" width="1" height="1" fill="#727842"/>
<rect x="372" y="210" width="1" height="1" fill="#727842"/>
<rect x="372" y="229" width="1" height="1" fill="#727842"/>
<rect x="372" y="247" width="1" height="1" fill="#727842"/>
<rect x="372" y="266" width="1" height="1" fill="#727842"/>
<rect x="372" y="284" width="1" height="1" fill="#727842"/>
<rect x="372" y="303" width="1" height="1" fill="#727842"/>
<rect x="372" y="321" width="1" height="1" fill="#727842"/>
<rect x="372" y="340" width="1" height="1" fill="#727842"/>
<rect x="372" y="358" width="1" height="1" fill="#727842"/>
<rect x="372" y="377" width="1" height="1" fill="#727842"/>
<rect x="372" y="395" width="1" height="1" fill="#727842"/>
<rect x="372" y="414" width="1" height="1" fill="#727842"/>
<rect x="385" y="81" width="1" height="1" fill="#727842"/>
<rect x="385" y="99" width="1" height="1" fill="#727842"/>
<rect x="385" y="118" width="1" height="1" fill="#727842"/>
<rect x="385" y="136" width="1" height="1" fill="#727842"/>
<rect x="385" y="155" width="1" height="1" fill="#727842"/>
<rect x="385" y="173" width="1" height="1" fill="#727842"/>
<rect x="385" y="192" width="1" height="1" fill="#727842"/>
<rect x="385" y="210" width="1" height="1" fill="#727842"/>
<rect x="385" y="229" width="1" height="1" fill="#727842"/>
<rect x="385" y="247" width="1" height="1" fill="#727842"/>
<rect x="385" y="266" width="1" height="1" fill="#727842"/>
<rect x="385" y="284" width="1" height="1" fill="#727842"/>
<rect x="385" y="303" width="1" height="1" fill="#727842"/>
<rect x="385" y="321" width="1" height="1" fill="#727842"/>
<rect x="385" y="340" width="1" height="1" fill="#727842"/>
<rect x="385" y="358" width="1" height="1" fill="#727842"/>
<rect x="385" y="377" width="1" height="1" fill="#727842"/>
<rect x="385" y="395" width="1" height="1" fill="#727842"/>
<rect x="385" y="414" width="1" height="1" fill="#727842"/>
<rect x="398" y="81" width="1" height="1" fill="#727842"/>
<rect x="398" y="99" width="1" height="1" fill="#727842"/>
<rect x="398" y="118" width="1" height="1" fill="#727842"/>
<rect x="398" y="136" width="1" height="1" fill="#727842"/>
<rect x="398" y="155" width="1" height="1" fill="#727842"/>
<rect x="398" y="173" width="1" height="1" fill="#727842"/>
<rect x="398" y="192" width="1" height="1" fill="#727842"/>
<rect x="398" y="210" width="1" height="1" fill="#727842"/>
<rect x="398" y="229" width="1" height="1" fill="#727842"/>
<rect x="398" y="247" width="1" height="1" fill="#727842"/>
<rect x="398" y="266" width="1" height="1" fill="#727842"/>
<rect x="398" y="284" width="1" height="1" fill="#727842"/>
<rect x="398" y="303" width="1" height="1" fill="#727842"/>
<rect x="398" y="321" width="1" height="1" fill="#727842"/>
<rect x="398" y="340" width="1" height="1" fill="#727842"/>
<rect x="398" y="358" width="1" height="1" fill="#727842"/>
<rect x="398" y="377" width="1" height="1" fill="#727842"/>
<rect x="398" y="395" width="1" height="1" fill="#727842"/>
<rect x="398" y="414" width="1" height="1" fill="#727842"/>
<rect x="411" y="81" width="1" height="1" fill="#727842"/>
<rect x="411" y="99" width="1" height="1" fill="#727842"/>
<rect x="411" y="118" width="1" height="1" fill="#727842"/>
<rect x="411" y="136" width="1" height="1" fill="#727842"/>
<rect x="411" y="155" width="1" height="1" fill="#727842"/>
<rect x="411" y="173" width="1" height="1" fill="#727842"/>
<rect x="411" y="192" width="1" height="1" fill="#727842"/>
<rect x="411" y="210" width="1" height="1" fill="#727842"/>
<rect x="411" y="229" width="1" height="1" fill="#727842"/>
<rect x="411" y="247" width="1" height="1" fill="#727842"/>
<rect x="411" y="266" width="1" height="1" fill="#727842"/>
<rect x="411" y="284" width="1" height="1" fill="#727842"/>
<rect x="411" y="303" width="1" height="1" fill="#727842"/>
<rect x="411" y="321" width="1" height="1" fill="#727842"/>
<rect x="411" y="340" width="1" height="1" fill="#727842"/>
<rect x="411" y="358" width="1" height="1" fill="#727842"/>
<rect x="411" y="377" width="1" height="1" fill="#727842"/>
<rect x="411" y="395" width="1" height="1" fill="#727842"/>
<rect x="411" y="414" width="1" height="1" fill="#727842"/>
<rect x="424" y="81" width="1" height="1" fill="#727842"/>
<rect x="424" y="99" width="1" height="1" fill="#727842"/>
<rect x="424" y="118" width="1" height="1" fill="#727842"/>
<rect x="424" y="136" width="1" height="1" fill="#727842"/>
<rect x="424" y="155" width="1" height="1" fill="#727842"/>
<rect x="424" y="173" width="1" height="1" fill="#727842"/>
<rect x="424" y="192" width="1" height="1" fill="#727842"/>
<rect x="424" y="210" width="1" height="1" fill="#727842"/>
<rect x="424" y="229" width="1" height="1" fill="#727842"/>
<rect x="424" y="247" width="1" height="1" fill="#727842"/>
<rect x="424" y="266" width="1" height="1" fill="#727842"/>
<rect x="424" y="284" width="1" height="1" fill="#727842"/>
<rect x="424" y="303" width="1" height="1" fill="#727842"/>
<rect x="424" y="321" width="1" height="1" fill="#727842"/>
<rect x="424" y="340" width="1" height="1" fill="#727842"/>
<rect x="424" y="358" width="1" height="1" fill="#727842"/>
<rect x="424" y="377" width="1" height="1" fill="#727842"/>
<rect x="424" y="395" width="1" height="1" fill="#727842"/>
<rect x="424" y="414" width="1" height="1" fill="#727842"/>
<rect x="437" y="81" width="1" height="1" fill="#727842"/>
<rect x="437" y="99" width="1" height="1" fill="#727842"/>
<rect x="437" y="118" width="1" height="1" fill="#727842"/>
<rect x="437" y="136" width="1" height="1" fill="#727842"/>
<rect x="437" y="155" width="1" height="1" fill="#727842"/>
<rect x="437" y="173" width="1" height="1" fill="#727842"/>
<rect x="437" y="192" width="1" height="1" fill="#727842"/>
<rect x="437" y="210" width="1" height="1" fill="#727842"/>
<rect x="437" y="229" width="1" height="1" fill="#727842"/>
<rect x="437" y="247" width="1" height="1" fill="#727842"/>
<rect x="437" y="266" width="1" height="1" fill="#727842"/>
<rect x="437" y="284" width="1" height="1" fill="#727842"/>
<rect x="437" y="303" width="1" height="1" fill="#727842"/>
<rect x="437" y="321" width="1" height="1" fill="#727842"/>
<rect x="437" y="340" width="1" height="1" fill="#727842"/>
<rect x="437" y="358" width="1" height="1" fill="#727842"/>
<rect x="437" y="377" width="1" height="1" fill="#727842"/>
<rect x="437" y="395" width="1" height="1" fill="#727842"/>
<rect x="437" y="414" width="1" height="1" fill="#727842"/>
<rect x="450" y="81" width="1" height="1" fill="#727842"/>
<rect x="450" y="99" width="1" height="1" fill="#727842"/>
<rect x="450" y="118" width="1" height="1" fill="#727842"/>
<rect x="450" y="136" width="1" height="1" fill="#727842"/>
<rect x="450" y="155" width="1" height="1" fill="#727842"/>
<rect x="450" y="173" width="1" height="1" fill="#727842"/>
<rect x="450" y="192" width="1" height="1" fill="#727842"/>
<rect x="450" y="210" width="1" height="1" fill="#727842"/>
<rect x="450" y="229" width="1" height="1" fill="#727842"/>
<rect x="450" y="247" width="1" height="1" fill="#727842"/>
<rect x="450" y="266" width="1" height="1" fill="#727842"/>
<rect x="450" y="284" width="1" height="1" fill="#727842"/>
<rect x="450" y="303" width="1" height="1" fill="#727842"/>
<rect x="450" y="321" width="1" height="1" fill="#727842"/>
<rect x="450" y="340" width="1" height="1" fill="#727842"/>
<rect x="450" y="358" width="1" height="1" fill="#727842"/>
<rect x="450" y="377" width="1" height="1" fill="#727842"/>
<rect x="450" y="395" width="1" height="1" fill="#727842"/>
<rect x="450" y="414" width="1" height="1" fill="#727842"/>
<rect x="463" y="81" width="1" height="1" fill="#727842"/>
<rect x="463" y="99" width="1" height="1" fill="#727842"/>
<rect x="463" y="118" width="1" height="1" fill="#727842"/>
<rect x="463" y="136" width="1" height="1" fill="#727842"/>
<rect x="463" y="155" width="1" height="1" fill="#727842"/>
<rect x="463" y="173" width="1" height="1" fill="#727842"/>
<rect x="463" y="192" width="1" height="1" fill="#727842"/>
<rect x="463" y="210" width="1" height="1" fill="#727842"/>
<rect x="463" y="229" width="1" height="1" fill="#727842"/>
<rect x="463" y="247" width="1" height="1" fill="#727842"/>
<rect x="463" y="266" width="1" height="1" fill="#727842"/>
<rect x="463" y="284" width="1" height="1" fill="#727842"/>
<rect x="463" y="303" width="1" height="1" fill="#727842"/>
<rect x="463" y="321" width="1" height="1" fill="#727842"/>
<rect x="463" y="340" width="1" height="1" fill="#727842"/>
<rect x="463" y="358" width="1" height="1" fill="#727842"/>
<rect x="463" y="377" width="1" height="1" fill="#727842"/>
<rect x="463" y="395" width="1" height="1" fill="#727842"/>
<rect x="463" y="414" width="1" height="1" fill="#727842"/>
<rect x="476" y="81" width="1" height="1" fill="#727842"/>
<rect x="476" y="99" width="1" height="1" fill="#727842"/>
<rect x="476" y="118" width="1" height="1" fill="#727842"/>
<rect x="476" y="136" width="1" height="1" fill="#727842"/>
<rect x="476" y="155" width="1" height="1" fill="#727842"/>
<rect x="476" y="173" width="1" height="1" fill="#727842"/>
<rect x="476" y="192" width="1" height="1" fill="#727842"/>
<rect x="476" y="210" width="1" height="1" fill="#727842"/>
<rect x="476" y="229" width="1" height="1" fill="#727842"/>
<rect x="476" y="247" width="1" height="1" fill="#727842"/>
<rect x="476" y="266" width="1" height="1" fill="#727842"/>
<rect x="476" y="284" width="1" height="1" fill="#727842"/>
<rect x="476" y="303" width="1" height="1" fill="#727842"/>
<rect x="476" y="321" width="1" height="1" fill="#727842"/>
<rect x="476" y="340" width="1" height="1" fill="#727842"/>
<rect x="476" y="358" width="1" height="1" fill="#727842"/>
<rect x="476" y="377" width="1" height="1" fill="#727842"/>
<rect x="476" y="395" width="1" height="1" fill="#727842"/>
<rect x="476" y="414" width="1" height="1" fill="#727842"/>
<rect x="489" y="81" width="1" height="1" fill="#727842"/>
<rect x="489" y="99" width="1" height="1" fill="#727842"/>
<rect x="489" y="118" width="1" height="1" fill="#727842"/>
<rect x="489" y="136" width="1" height="1" fill="#727842"/>
<rect x="489" y="155" width="1" height="1" fill="#727842"/>
<rect x="489" y="173" width="1" height="1" fill="#727842"/>
<rect x="489" y="192" width="1" height="1" fill="#727842"/>
<rect x="489" y="210" width="1" height="1" fill="#727842"/>
<rect x="489" y="229" width="1" height="1" fill="#727842"/>
<rect x="489" y="247" width="1" height="1" fill="#727842"/>
<rect x="489" y="266" width="1" height="1" fill="#727842"/>
<rect x="489" y="284" width="1" height="1" fill="#727842"/>
<rect x="489" y="303" width="1" height="1" fill="#727842"/>
<rect x="489" y="321" width="1" height="1" fill="#727842"/>
<rect x="489" y="340" width="1" height="1" fill="#727842"/>
<rect x="489" y="358" width="1" height="1" fill="#727842"/>
<rect x="489" y="377" width="1" height="1" fill="#727842"/>
<rect x="489" y="395" width="1" height="1" fill="#727842"/>
<rect x="489" y="414" width="1" height="1" fill="#727842"/>
<rect x="502" y="81" width="1" height="1" fill="#727842"/>
<rect x="502" y="99" width="1" height="1" fill="#727842"/>
<rect x="502" y="118" width="1" height="1" fill="#727842"/>
<rect x="502" y="136" width="1" height="1" fill="#727842"/>
<rect x="502" y="155" width="1" height="1" fill="#727842"/>
<rect x="502" y="173" width="1" height="1" fill="#727842"/>
<rect x="502" y="192" width="1" height="1" fill="#727842"/>
<rect x="502" y="210" width="1" height="1" fill="#727842"/>
<rect x="502" y="229" width="1" height="1" fill="#727842"/>
<rect x="502" y="247" width="1" height="1" fill="#727842"/>
<rect x="502" y="266" width="1" height="1" fill="#727842"/>
<rect x="502" y="284" width="1" height="1" fill="#727842"/>
<rect x="502" y="303" width="1" height="1" fill="#727842"/>
<rect x="502" y="321" width="1" height="1" fill="#727842"/>
<rect x="502" y="340" width="1" height="1" fill="#727842"/>
<rect x="502" y="358" width="1" height="1" fill="#727842"/>
<rect x="502" y="377" width="1" height="1" fill="#727842"/>
<rect x="502" y="395" width="1" height="1" fill="#727842"/>
<rect x="502" y="414" width="1" height="1" fill="#727842"/>
<rect x="515" y="81" width="1" height="1" fill="#727842"/>
<rect x="515" y="99" width="1" height="1" fill="#727842"/>
<rect x="515" y="118" width="1" height="1" fill="#727842"/>
<rect x="515" y="136" width="1" height="1" fill="#727842"/>
<rect x="515" y="155" width="1" height="1" fill="#727842"/>
<rect x="515" y="173" width="1" height="1" fill="#727842"/>
<rect x="515" y="192" width="1" height="1" fill="#727842"/>
<rect x="515" y="210" width="1" height="1" fill="#727842"/>
<rect x="515" y="229" width="1" height="1" fill="#727842"/>
<rect x="515" y="247" width="1" height="1" fill="#727842"/>
<rect x="515" y="266" width="1" height="1" fill="#727842"/>
<rect x="515" y="284" width="1" height="1" fill="#727842"/>
<rect x="515" y="303" width="1" height="1" fill="#727842"/>
<rect x="515" y="321" width="1" height="1" fill="#727842"/>
<rect x="515" y="340" width="1" height="1" fill="#727842"/>
<rect x="515" y="358" width="1" height="1" fill="#727842"/>
<rect x="515" y="377" width="1" height="1" fill="#727842"/>
<rect x="515" y="395" width="1" height="1" fill="#727842"/>
<rect x="515" y="414" width="1" height="1" fill="#727842"/>
<rect x="528" y="81" width="1" height="1" fill="#727842"/>
<rect x="528" y="99" width="1" height="1" fill="#727842"/>
<rect x="528" y="118" width="1" height="1" fill="#727842"/>
<rect x="528" y="136" width="1" height="1" fill="#727842"/>
<rect x="528" y="155" width="1" height="1" fill="#727842"/>
<rect x="528" y="173" width="1" height="1" fill="#727842"/>
<rect x="528" y="192" width="1" height="1" fill="#727842"/>
<rect x="528" y="210" width="1" height="1" fill="#727842"/>
<rect x="528" y="229" width="1" height="1" fill="#727842"/>
<rect x="528" y="247" width="1" height="1" fill="#727842"/>
<rect x="528" y="266" width="1" height="1" fill="#727842"/>
<rect x="528" y="284" width="1" height="1" fill="#727842"/>
<rect x="528" y="303" width="1" height="1" fill="#727842"/>
<rect x="528" y="321" width="1" height="1" fill="#727842"/>
<rect x="528" y="340" width="1" height="1" fill="#727842"/>
<rect x="528" y="358" width="1" height="1" fill="#727842"/>
<rect x="528" y="377" width="1" height="1" fill="#727842"/>
<rect x="528" y="395" width="1" height="1" fill="#727842"/>
<rect x="528" y="414" width="1" height="1" fill="#727842"/>
<rect x="541" y="81" width="1" height="1" fill="#727842"/>
<rect x="541" y="99" width="1" height="1" fill="#727842"/>
<rect x="541" y="118" width="1" height="1" fill="#727842"/>
<rect x="541" y="136" width="1" height="1" fill="#727842"/>
<rect x="541" y="155" width="1" height="1" fill="#727842"/>
<rect x="541" y="173" width="1" height="1" fill="#727842"/>
<rect x="541" y="192" width="1" height="1" fill="#727842"/>
<rect x="541" y="210" width="1" height="1" fill="#727842"/>
<rect x="541" y="229" width="1" height="1" fill="#727842"/>
<rect x="541" y="247" width="1" height="1" fill="#727842"/>
<rect x="541" y="266" width="1" height="1" fill="#727842"/>
<rect x="541" y="284" width="1" height="1" fill="#727842"/>
<rect x="541" y="303" width="1" height="1" fill="#727842"/>
<rect x="541" y="321" width="1" height="1" fill="#727842"/>
<rect x="541" y="340" width="1" height="1" fill="#727842"/>
<rect x="541" y="358" width="1" height="1" fill="#727842"/>
<rect x="541" y="377" width="1" height="1" fill="#727842"/>
<rect x="541" y="395" width="1" height="1" fill="#727842"/>
<rect x="541" y="414" width="1" height="1" fill="#727842"/>
<rect x="554" y="81" width="1" height="1" fill="#727842"/>
<rect x="554" y="99" width="1" height="1" fill="#727842"/>
<rect x="554" y="118" width="1" height="1" fill="#727842"/>
<rect x="554" y="136" width="1" height="1" fill="#727842"/>
<rect x="554" y="155" width="1" height="1" fill="#727842"/>
<rect x="554" y="173" width="1" height="1" fill="#727842"/>
<rect x="554" y="192" width="1" height="1" fill="#727842"/>
<rect x="554" y="210" width="1" height="1" fill="#727842"/>
<rect x="554" y="229" width="1" height="1" fill="#727842"/>
<rect x="554" y="247" width="1" height="1" fill="#727842"/>
<rect x="554" y="266" width="1" height="1" fill="#727842"/>
<rect x="554" y="284" width="1" height="1" fill="#727842"/>
<rect x="554" y="303" width="1" height="1" fill="#727842"/>
<rect x="554" y="321" width="1" height="1" fill="#727842"/>
<rect x="554" y="340" width="1" height="1" fill="#727842"/>
<rect x="554" y="358" width="1" height="1" fill="#727842"/>
<rect x="554" y="377" width="1" height="1" fill="#727842"/>
<rect x="554" y="395" width="1" height="1" fill="#727842"/>
<rect x="554" y="414" width="1" height="1" fill="#727842"/>
<rect x="567" y="81" width="1" height="1" fill="#727842"/>
<rect x="567" y="99" width="1" height="1" fill="#727842"/>
<rect x="567" y="118" width="1" height="1" fill="#727842"/>
<rect x="567" y="136" width="1" height="1" fill="#727842"/>
<rect x="567" y="155" width="1" height="1" fill="#727842"/>
<rect x="567" y="173" width="1" height="1" fill="#727842"/>
<rect x="567" y="192" width="1" height="1" fill="#727842"/>
<rect x="567" y="210" width="1" height="1" fill="#727842"/>
<rect x="567" y="229" width="1" height="1" fill="#727842"/>
<rect x="567" y="247" width="1" height="1" fill="#727842"/>
<rect x="567" y="266" width="1" height="1" fill="#727842"/>
<rect x="567" y="284" width="1" height="1" fill="#727842"/>
<rect x="567" y="303" width="1" height="1" fill="#727842"/>
<rect x="567" y="321" width="1" height="1" fill="#727842"/>
<rect x="567" y="340" width="1" height="1" fill="#727842"/>
<rect x="567" y="358" width="1" height="1" fill="#727842"/>
<rect x="567" y="377" width="1" height="1" fill="#727842"/>
<rect x="567" y="395" width="1" height="1" fill="#727842"/>
<rect x="567" y="414" width="1" height="1" fill="#727842"/>
<rect x="580" y="81" width="1" height="1" fill="#727842"/>
<rect x="580" y="99" width="1" height="1" fill="#727842"/>
<rect x="580" y="118" width="1" height="1" fill="#727842"/>
<rect x="580" y="136" width="1" height="1" fill="#727842"/>
<rect x="580" y="155" width="1" height="1" fill="#727842"/>
<rect x="580" y="173" width="1" height="1" fill="#727842"/>
<rect x="580" y="192" width="1" height="1" fill="#727842"/>
<rect x="580" y="210" width="1" height="1" fill="#727842"/>
<rect x="580" y="229" width="1" height="1" fill="#727842"/>
<rect x="580" y="247" width="1" height="1" fill="#727842"/>
<rect x="580" y="266" width="1" height="1" fill="#727842"/>
<rect x="580" y="284" width="1" height="1" fill="#727842"/>
<rect x="580" y="303" width="1" height="1" fill="#727842"/>
<rect x="580" y="321" width="1" height="1" fill="#727842"/>
<rect x="580" y="340" width="1" height="1" fill="#727842"/>
<rect x="580" y="358" width="1" height="1" fill="#727842"/>
<rect x="580" y="377" width="1" height="1" fill="#727842"/>
<rect x="580" y="395" width="1" height="1" fill="#727842"/>
<rect x="580" y="414" width="1" height="1" fill="#727842"/>
<rect x="593" y="81" width="1" height="1" fill="#727842"/>
<rect x="593" y="99" width="1" height="1" fill="#727842"/>
<rect x="593" y="118" width="1" height="1" fill="#727842"/>
<rect x="593" y="136" width="1" height="1" fill="#727842"/>
<rect x="593" y="155" width="1" height="1" fill="#727842"/>
<rect x="593" y="173" width="1" height="1" fill="#727842"/>
<rect x="593" y="192" width="1" height="1" fill="#727842"/>
<rect x="593" y="210" width="1" height="1" fill="#727842"/>
<rect x="593" y="229" width="1" height="1" fill="#727842"/>
<rect x="593" y="247" width="1" height="1" fill="#727842"/>
<rect x="593" y="266" width="1" height="1" fill="#727842"/>
<rect x="593" y="284" width="1" height="1" fill="#727842"/>
<rect x="593" y="303" width="1" height="1" fill="#727842"/>
<rect x="593" y="321" width="1" height="1" fill="#727842"/>
<rect x="593" y="340" width="1" height="1" fill="#727842"/>
<rect x="593" y="358" width="1" height="1" fill="#727842"/>
<rect x="593" y="377" width="1" height="1" fill="#727842"/>
<rect x="593" y="395" width="1" height="1" fill="#727842"/>
<rect x="593" y="414" width="1" height="1" fill="#727842"/>
<rect x="606" y="81" width="1" height="1" fill="#727842"/>
<rect x="606" y="99" width="1" height="1" fill="#727842"/>
<rect x="606" y="118" width="1" height="1" fill="#727842"/>
<rect x="606" y="136" width="1" height="1" fill="#727842"/>
<rect x="606" y="155" width="1" height="1" fill="#727842"/>
<rect x="606" y="173" width="1" height="1" fill="#727842"/>
<rect x="606" y="192" width="1" height="1" fill="#727842"/>
<rect x="606" y="210" width="1" height="1" fill="#727842"/>
<rect x="606" y="229" width="1" height="1" fill="#727842"/>
<rect x="606" y="247" width="1" height="1" fill="#727842"/>
<rect x="606" y="266" width="1" height="1" fill="#727842"/>
<rect x="606" y="284" width="1" height="1" fill="#727842"/>
<rect x="606" y="303" width="1" height="1" fill="#727842"/>
<rect x="606" y="321" width="1" height="1" fill="#727842"/>
<rect x="606" y="340" width="1" height="1" fill="#727842"/>
<rect x="606" y="358" width="1" height="1" fill="#727842"/>
<rect x="606" y="377" width="1" height="1" fill="#727842"/>
<rect x="606" y="395" width="1" height="1" fill="#727842"/>
<rect x="606" y="414" width="1" height="1" fill="#727842"/>
<rect x="619" y="73" width="1" height="360" fill="#000030"/>
<rect x="620" y="73" width="1" height="360" fill="#ffffff"/>
<rect x="459.5" y="83.5" width="150" height="50" fill="#000060" stroke="#626250" stroke-width="1"/>
<rect x="489" y="100" width="10" height="2" fill="#ff00ff"/>
<rect x="489" y="116" width="10" height="2" fill="#ffff00"/>
<rect x="48" y="433" width="1" height="7" fill="#404040"/>
<rect x="60" y="433" width="1" height="4" fill="#404040"/>
<rect x="73" y="433" width="1" height="7" fill="#404040"/>
<rect x="86" y="433" width="1" height="4" fill="#404040"/>
<rect x="99" y="433" width="1" height="7" fill="#404040"/>
<rect x="112" y="433" width="1" height="4" fill="#404040"/>
<rect x="125" y="433" width="1" height="7" fill="#404040"/>
<rect x="138" y="433" width="1" height="4" fill="#404040"/>
<rect x="151" y="433" width="1" height="7" fill="#404040"/>
<rect x="164" y="433" width="1" height="4" fill="#404040"/>
<rect x="177" y="433" width="1" height="7" fill="#404040"/>
<rect x="190" y="433" width="1" height="4" fill="#404040"/>
<rect x="203" y="433" width="1" height="7" fill="#404040"/>
<rect x="216" y="433" width="1" height="4" fill="#404040"/>
<rect x="229" y="433" width="1" height="7" fill="#404040"/>
<rect x="242" y="433" width="1" height="4" fill="#404040"/>
<rect x="255" y="433" width="1" height="7" fill="#404040"/>
<rect x="268" y="433" width="1" height="4" fill="#404040"/>
<rect x="281" y="433" width="1" height="7" fill="#404040"/>
<rect x="294" y="433" width="1" height="4" fill="#404040"/>
<rect x="307" y="433" width="1" height="7" fill="#404040"/>
<rect x="320" y="433" width="1" height="4" fill="#404040"/>
<rect x="333" y="433" width="1" height="7" fill="#404040"/>
<rect x="346" y="433" width="1" height="4" fill="#404040"/>
<rect x="359" y="433" width="1" height="7" fill="#404040"/>
<rect x="372" y="433" width="1" height="4" fill="#404040"/>
<rect x="385" y="433" width="1" height="7" fill="#404040"/>
<rect x="398" y="433" width="1" height="4" fill="#404040"/>
<rect x="411" y="433" width="1" height="7" fill="#404040"/>
<rect x="424" y="433" width="1" height="4" fill="#404040"/>
<rect x="437" y="433" width="1" height="7" fill="#404040"/>
<rect x="450" y="433" width="1" height="4" fill="#404040"/>
<rect x="463" y="433" width="1" height="7" fill="#404040"/>
<rect x="476" y="433" width="1" height="4" fill="#404040"/>
<rect x="489" y="433" width="1" height="7" fill="#404040"/>
<rect x="502" y="433" width="1" height="4" fill="#404040"/>
<rect x="515" y="433" width="1" height="7" fill="#404040"/>
<rect x="528" y="433" width="1" height="4" fill="#404040"/>
<rect x="541" y="433" width="1" height="7" fill="#404040"/>
<rect x="554" y="433" width="1" height="4" fill="#404040"/>
<rect x="567" y="433" width="1" height="7" fill="#404040"/>
<rect x="580" y="433" width="1" height="4" fill="#404040"/>
<rect x="593" y="433" width="1" height="7" fill="#404040"/>
<rect x="606" y="433" width="1" height="4" fill="#404040"/>
<rect x="620" y="81" width="3" height="1" fill="#404040"/>
<rect x="620" y="99" width="6" height="1" fill="#404040"/>
<rect x="620" y="118" width="3" height="1" fill="#404040"/>
<rect x="620" y="136" width="6" height="1" fill="#404040"/>
<rect x="620" y="155" width="3" height="1" fill="#404040"/>
<rect x="620" y="173" width="6" height="1" fill="#404040"/>
<rect x="620" y="192" width="3" height="1" fill="#404040"/>
<rect x="620" y="210" width="6" height="1" fill="#404040"/>
<rect x="620" y="229" width="3" height="1" fill="#404040"/>
<rect x="620" y="247" width="6" height="1" fill="#404040"/>
<rect x="620" y="266" width="3" height="1" fill="#404040"/>
<rect x="620" y="284" width="6" height="1" fill="#404040"/>
<rect x="620" y="303" width="3" height="1" fill="#404040"/>
<rect x="620" y="321" width="6" height="1" fill="#404040"/>
<rect x="620" y="340" width="3" height="1" fill="#404040"/>
<rect x="620" y="358" width="6" height="1" fill="#404040"/>
<rect x="620" y="377" width="3" height="1" fill="#404040"/>
<rect x="620" y="395" width="6" height="1" fill="#404040"/>
<rect x="620" y="414" width="3" height="1" fill="#404040"/>
<polyline points="48.5,124.5 50.5,130.5 50.5,137.5 52.5,143.5 53.5,149.5 54.5,141.5 55.5,143.5 56.5,126.5 58.5,137.5 59.5,147.5 60.5,138.5 61.5,153.5 62.5,159.5 64.5,147.5 66.5,159.5 66.5,151.5 68.5,168.5 70.5,174.5 72.5,160.5 74.5,174.5 76.5,173.5 76.5,188.5 78.5,192.5 80.5,178.5 81.5,196.5 82.5,188.5 84.5,178.5 85.5,193.5 87.5,203.5 89.5,197.5 91.5,189.5 93.5,204.5 95.5,206.5 96.5,192.5 98.5,205.5 99.5,197.5 100.5,215.5 103.5,200.5 104.5,214.5 106.5,208.5 107.5,224.5 110.5,207.5 111.5,225.5 113.5,210.5 116.5,228.5 118.5,222.5 120.5,231.5 121.5,215.5 123.5,231.5 126.5,227.5 128.5,233.5 128.5,232.5 129.5,221.5 130.5,226.5 131.5,241.5 132.5,239.5 133.5,234.5 134.5,231.5 135.5,236.5 136.5,244.5 137.5,244.5 138.5,239.5 139.5,235.5 140.5,239.5 141.5,249.5 142.5,250.5 143.5,244.5 144.5,235.5 145.5,231.5 146.5,236.5 147.5,245.5 148.5,253.5 149.5,253.5 150.5,247.5 151.5,247.5 152.5,253.5 153.5,258.5 154.5,256.5 155.5,252.5 156.5,247.5 157.5,245.5 158.5,250.5 159.5,257.5 160.5,257.5 161.5,255.5 162.5,254.5 163.5,258.5 164.5,264.5 165.5,268.5 166.5,267.5 167.5,265.5 168.5,262.5 169.5,260.5 170.5,260.5 171.5,265.5 172.5,273.5 173.5,277.5 174.5,275.5 175.5,272.5 176.5,268.5 177.5,265.5 178.5,266.5 179.5,271.5 180.5,277.5 181.5,279.5 182.5,278.5 183.5,276.5 184.5,274.5 185.5,273.5 186.5,276.5 187.5,281.5 188.5,285.5 189.5,286.5 190.5,282.5 191.5,277.5 192.5,272.5 193.5,268.5 194.5,269.5 195.5,276.5 196.5,284.5 197.5,289.5 198.5,288.5 199.5,285.5 200.5,282.5 201.5,278.5 202.5,277.5 203.5,280.5 204.5,285.5 205.5,290.5 206.5,292.5 207.5,290.5 208.5,286.5 209.5,282.5 210.5,279.5 211.5,279.5 212.5,282.5 213.5,288.5 214.5,293.5 215.5,297.5 216.5,298.5 217.5,296.5 218.5,293.5 219.5,289.5 220.5,286.5 221.5,287.5 222.5,291.5 223.5,297.5 224.5,300.5 225.5,299.5 226.5,298.5 227.5,295.5 228.5,292.5 229.5,290.5 230.5,289.5 231.5,290.5 232.5,293.5 233.5,296.5 234.5,300.5 235.5,302.5 236.5,302.5 237.5,300.5 238.5,298.5 239.5,296.5 240.5,293.5 241.5,291.5 242.5,290.5 243.5,291.5 244.5,296.5 245.5,302.5 246.5,305.5 247.5,305.5 248.5,304.5 249.5,303.5 250.5,302.5 251.5,301.5 252.5,301.5 253.5,300.5 254.5,301.5 255.5,303.5 256.5,306.5 257.5,308.5 258.5,309.5 259.5,309.5 260.5,308.5 261.5,308.5 262.5,307.5 263.5,305.5 264.5,304.5 265.5,302.5 266.5,302.5 267.5,305.5 268.5,309.5 269.5,313.5 270.5,314.5 271.5,314.5 272.5,313.5 273.5,311.5 274.5,310.5 275.5,309.5 276.5,308.5 277.5,309.5 278.5,310.5 279.5,311.5 280.5,313.5 281.5,314.5 282.5,314.5 283.5,313.5 284.5,313.5 285.5,313.5 286.5,315.5 287.5,316.5 288.5,315.5 289.5,314.5 290.5,312.5 291.5,311.5 292.5,311.5 293.5,313.5 294.5,316.5 295.5,319.5 296.5,320.5 297.5,320.5 298.5,320.5 299.5,320.5 300.5,320.5 301.5,318.5 302.5,317.5 303.5,317.5 304.5,317.5 305.5,317.5 306.5,317.5 307.5,317.5 308.5,319.5 309.5,321.5 310.5,322.5 311.5,323.5 312.5,323.5 313.5,323.5 314.5,321.5 315.5,320.5 316.5,320.5 317.5,323.5 318.5,323.5 319.5,323.5 320.5,322.5 321.5,321.5 322.5,320.5 323.5,321.5 324.5,322.5 325.5,323.5 326.5,324.5 327.5,324.5 328.5,325.5 329.5,325.5 330.5,325.5 331.5,325.5 332.5,324.5 333.5,324.5 334.5,323.5 335.5,322.5 336.5,320.5 337.5,318.5 338.5,317.5 339.5,317.5 340.5,318.5 341.5,320.5 342.5,322.5 343.5,326.5 344.5,327.5 345.5,327.5 346.5,326.5 347.5,326.5 348.5,326.5 349.5,327.5 350.5,327.5 351.5,327.5 352.5,327.5 353.5,326.5 354.5,325.5 355.5,325.5 356.5,327.5 357.5,328.5 358.5,330.5 359.5,331.5 360.5,329.5 361.5,329.5 362.5,329.5 363.5,329.5 364.5,330.5 365.5,331.5 366.5,332.5 367.5,333.5 368.5,333.5 369.5,332.5 370.5,332.5 371.5,331.5 372.5,329.5 373.5,328.5 374.5,327.5 375.5,328.5 376.5,331.5 377.5,333.5 378.5,334.5 379.5,335.5 380.5,336.5 381.5,336.5 382.5,336.5 383.5,335.5 384.5,335.5 385.5,336.5 386.5,336.5 387.5,335.5 388.5,334.5 389.5,335.5 390.5,335.5 391.5,335.5 392.5,335.5 393.5,335.5 394.5,335.5 395.5,336.5 396.5,338.5 397.5,338.5 398.5,338.5 399.5,338.5 400.5,338.5 401.5,338.5 402.5,338.5 403.5,338.5 404.5,338.5 405.5,339.5 406.5,339.5 407.5,339.5 408.5,339.5 409.5,339.5 410.5,338.5 411.5,337.5 412.5,336.5 413.5,336.5 414.5,337.5 415.5,338.5 416.5,339.5 417.5,340.5 418.5,341.5 419.5,341.5 420.5,342.5 421.5,342.5 422.5,342.5 423.5,341.5 424.5,341.5 425.5,341.5 426.5,341.5 427.5,341.5 428.5,341.5 429.5,341.5 430.5,342.5 431.5,343.5 432.5,343.5 433.5,342.5 434.5,341.5 435.5,339.5 436.5,338.5 437.5,338.5 438.5,338.5 439.5,340.5 440.5,341.5 441.5,342.5 442.5,342.5 443.5,342.5 444.5,342.5 445.5,341.5 446.5,341.5 447.5,340.5 448.5,340.5 449.5,340.5 450.5,340.5 451.5,340.5 452.5,340.5 453.5,339.5 454.5,338.5 455.5,337.5 456.5,337.5 457.5,337.5 458.5,337.5 459.5,337.5 460.5,336.5 461.5,336.5 462.5,336.5 463.5,336.5 464.5,336.5 465.5,336.5 466.5,336.5 467.5,336.5 468.5,336.5 469.5,336.5 470.5,336.5 471.5,335.5 472.5,335.5 473.5,334.5 474.5,334.5 475.5,333.5 476.5,333.5 477.5,333.5 478.5,332.5 479.5,332.5 480.5,333.5 481.5,332.5 482.5,332.5 483.5,332.5 484.5,332.5 485.5,332.5 486.5,332.5 487.5,332.5 488.5,332.5 489.5,332.5 490.5,331.5 491.5,331.5 492.5,331.5 493.5,331.5 494.5,331.5 495.5,331.5 496.5,330.5 497.5,329.5 498.5,329.5 499.5,329.5 500.5,329.5 501.5,328.5 502.5,328.5 503.5,328.5 504.5,327.5 505.5,326.5 506.5,327.5 507.5,327.5 508.5,326.5 509.5,325.5 510.5,325.5 511.5,325.5 512.5,325.5 513.5,325.5 514.5,326.5 515.5,326.5 516.5,325.5 517.5,324.5 518.5,324.5 519.5,324.5 520.5,324.5 521.5,324.5 522.5,324.5 523.5,324.5 524.5,324.5 525.5,324.5 526.5,324.5 527.5,323.5 528.5,324.5 529.5,323.5 530.5,322.5 531.5,321.5 532.5,320.5 533.5,321.5 534.5,321.5 535.5,321.5 536.5,321.5 537.5,321.5 538.5,321.5 539.5,320.5 540.5,320.5 541.5,320.5 542.5,321.5 543.5,321.5 544.5,319.5 545.5,319.5 546.5,319.5 547.5,319.5 548.5,320.5 549.5,320.5 550.5,320.5 551.5,320.5 552.5,320.5 553.5,319.5 554.5,319.5 555.5,319.5 556.5,318.5 557.5,318.5 558.5,318.5 559.5,317.5 560.5,317.5 561.5,317.5 562.5,317.5 563.5,318.5 564.5,318.5 565.5,318.5 566.5,318.5 567.5,317.5 568.5,318.5 569.5,318.5 570.5,318.5 571.5,318.5 572.5,318.5 573.5,318.5 574.5,317.5 575.5,317.5 576.5,317.5 577.5,318.5 578.5,318.5 579.5,317.5 580.5,317.5 581.5,317.5 582.5,317.5 583.5,317.5 584.5,317.5 585.5,317.5 586.5,317.5 587.5,317.5 588.5,317.5 589.5,317.5 590.5,317.5 591.5,317.5 592.5,317.5 593.5,316.5 594.5,316.5 595.5,316.5 596.5,316.5 597.5,316.5 598.5,317.5 599.5,317.5 600.5,317.5 601.5,317.5 602.5,317.5 603.5,317.5 604.5,318.5 605.5,318.5 606.5,318.5 607.5,318.5 608.5,317.5 609.5,317.5 610.5,317.5 611.5,317.5 612.5,318.5 613.5,318.5 614.5,317.5 615.5,317.5 616.5,317.5 617.5,317.5 618.5,318.5 619.5,318.5" fill="none" stroke="#ff00ff" stroke-width="1"/>
<polyline points="48.5,125.5 50.5,131.5 50.5,138.5 52.5,144.5 53.5,150.5 54.5,142.5 55.5,144.5 56.5,127.5 58.5,138.5 59.5,148.5 60.5,139.5 61.5,154.5 62.5,160.5 64.5,148.5 66.5,160.5 66.5,152.5 68.5,169.5 70.5,175.5 72.5,161.5 74.5,175.5 76.5,174.5 76.5,189.5 78.5,193.5 80.5,179.5 81.5,197.5 82.5,189.5 84.5,179.5 85.5,194.5 87.5,204.5 89.5,198.5 91.5,190.5 93.5,205.5 95.5,207.5 96.5,193.5 98.5,206.5 99.5,198.5 100.5,216.5 103.5,201.5 104.5,215.5 106.5,209.5 107.5,225.5 110.5,208.5 111.5,226.5 113.5,211.5 116.5,229.5 118.5,223.5 120.5,232.5 121.5,216.5 123.5,232.5 126.5,228.5 128.5,234.5 128.5,233.5 129.5,222.5 130.5,227.5 131.5,242.5 132.5,240.5 133.5,235.5 134.5,232.5 135.5,237.5 136.5,245.5 137.5,245.5 138.5,240.5 139.5,236.5 140.5,240.5 141.5,250.5 142.5,251.5 143.5,245.5 144.5,236.5 145.5,232.5 146.5,237.5 147.5,246.5 148.5,254.5 149.5,254.5 150.5,248.5 151.5,248.5 152.5,254.5 153.5,259.5 154.5,257.5 155.5,253.5 156.5,248.5 157.5,246.5 158.5,251.5 159.5,258.5 160.5,258.5 161.5,256.5 162.5,255.5 163.5,259.5 164.5,265.5 165.5,269.5 166.5,268.5 167.5,266.5 168.5,263.5 169.5,261.5 170.5,261.5 171.5,266.5 172.5,274.5 173.5,278.5 174.5,276.5 175.5,273.5 176.5,269.5 177.5,266.5 178.5,267.5 179.5,272.5 180.5,278.5 181.5,280.5 182.5,279.5 183.5,277.5 184.5,275.5 185.5,274.5 186.5,277.5 187.5,282.5 188.5,286.5 189.5,287.5 190.5,283.5 191.5,278.5 192.5,273.5 193.5,269.5 194.5,270.5 195.5,277.5 196.5,285.5 197.5,290.5 198.5,289.5 199.5,286.5 200.5,283.5 201.5,279.5 202.5,278.5 203.5,281.5 204.5,286.5 205.5,291.5 206.5,293.5 207.5,291.5 208.5,287.5 209.5,283.5 210.5,280.5 211.5,280.5 212.5,283.5 213.5,289.5 214.5,294.5 215.5,298.5 216.5,299.5 217.5,297.5 218.5,294.5 219.5,290.5 220.5,287.5 221.5,288.5 222.5,292.5 223.5,298.5 224.5,301.5 225.5,300.5 226.5,299.5 227.5,296.5 228.5,293.5 229.5,291.5 230.5,290.5 231.5,291.5 232.5,294.5 233.5,297.5 234.5,301.5 235.5,303.5 236.5,303.5 237.5,301.5 238.5,299.5 239.5,297.5 240.5,294.5 241.5,292.5 242.5,291.5 243.5,292.5 244.5,297.5 245.5,303.5 246.5,306.5 247.5,306.5 248.5,305.5 249.5,304.5 250.5,303.5 251.5,302.5 252.5,302.5 253.5,301.5 254.5,302.5 255.5,304.5 256.5,307.5 257.5,309.5 258.5,310.5 259.5,310.5 260.5,309.5 261.5,309.5 262.5,308.5 263.5,306.5 264.5,305.5 265.5,303.5 266.5,303.5 267.5,306.5 268.5,310.5 269.5,314.5 270.5,315.5 271.5,315.5 272.5,314.5 273.5,312.5 274.5,311.5 275.5,310.5 276.5,309.5 277.5,310.5 278.5,311.5 279.5,312.5 280.5,314.5 281.5,315.5 282.5,315.5 283.5,314.5 284.5,314.5 285.5,314.5 286.5,316.5 287.5,317.5 288.5,316.5 289.5,315.5 290.5,313.5 291.5,312.5 292.5,312.5 293.5,314.5 294.5,317.5 295.5,320.5 296.5,321.5 297.5,321.5 298.5,321.5 299.5,321.5 300.5,321.5 301.5,319.5 302.5,318.5 303.5,318.5 304.5,318.5 305.5,318.5 306.5,318.5 307.5,318.5 308.5,320.5 309.5,322.5 310.5,323.5 311.5,324.5 312.5,324.5 313.5,324.5 314.5,322.5 315.5,321.5 316.5,321.5 317.5,324.5 318.5,324.5 319.5,324.5 320.5,323.5 321.5,322.5 322.5,321.5 323.5,322.5 324.5,323.5 325.5,324.5 326.5,325.5 327.5,325.5 328.5,326.5 329.5,326.5 330.5,326.5 331.5,326.5 332.5,325.5 333.5,325.5 334.5,324.5 335.5,323.5 336.5,321.5 337.5,319.5 338.5,318.5 339.5,318.5 340.5,319.5 341.5,321.5 342.5,323.5 343.5,327.5 344.5,328.5 345.5,328.5 346.5,327.5 347.5,327.5 348.5,327.5 349.5,328.5 350.5,328.5 351.5,328.5 352.5,328.5 353.5,327.5 354.5,326.5 355.5,326.5 356.5,328.5 357.5,329.5 358.5,331.5 359.5,332.5 360.5,331.5 361.5,331.5 362.5,331.5 363.5,331.5 364.5,332.5 365.5,333.5 366.5,334.5 367.5,335.5 368.5,335.5 369.5,334.5 370.5,334.5 371.5,333.5 372.5,331.5 373.5,330.5 374.5,329.5 375.5,330.5 376.5,333.5 377.5,335.5 378.5,336.5 379.5,337.5 380.5,338.5 381.5,338.5 382.5,338.5 383.5,337.5 384.5,337.5 385.5,338.5 386.5,338.5 387.5,337.5 388.5,336.5 389.5,337.5 390.5,337.5 391.5,337.5 392.5,337.5 393.5,337.5 394.5,337.5 395.5,338.5 396.5,340.5 397.5,340.5 398.5,340.5 399.5,340.5 400.5,340.5 401.5,340.5 402.5,340.5 403.5,340.5 404.5,340.5 405.5,341.5 406.5,341.5 407.5,341.5 408.5,341.5 409.5,341.5 410.5,340.5 411.5,339.5 412.5,338.5 413.5,338.5 414.5,339.5 415.5,340.5 416.5,341.5 417.5,342.5 418.5,343.5 419.5,343.5 420.5,344.5 421.5,344.5 422.5,344.5 423.5,343.5 424.5,343.5 425.5,343.5 426.5,343.5 427.5,343.5 428.5,343.5 429.5,343.5 430.5,344.5 431.5,345.5 432.5,345.5 433.5,344.5 434.5,343.5 435.5,341.5 436.5,340.5 437.5,340.5 438.5,340.5 439.5,342.5 440.5,343.5 441.5,344.5 442.5,344.5 443.5,344.5 444.5,344.5 445.5,343.5 446.5,343.5 447.5,342.5 448.5,342.5 449.5,342.5 450.5,342.5 451.5,342.5 452.5,342.5 453.5,341.5 454.5,340.5 455.5,339.5 456.5,339.5 457.5,339.5 458.5,339.5 459.5,339.5 460.5,338.5 461.5,338.5 462.5,338.5 463.5,338.5 464.5,338.5 465.5,338.5 466.5,338.5 467.5,338.5 468.5,338.5 469.5,338.5 470.5,338.5 471.5,337.5 472.5,337.5 473.5,336.5 474.5,336.5 475.5,335.5 476.5,335.5 477.5,335.5 478.5,334.5 479.5,334.5 480.5,333.5 481.5,332.5 482.5,332.5 483.5,332.5 484.5,332.5 485.5,332.5 486.5,332.5 487.5,332.5 488.5,332.5 489.5,332.5 490.5,332.5 491.5,332.5 492.5,332.5 493.5,332.5 494.5,331.5 495.5,331.5 496.5,331.5 497.5,330.5 498.5,330.5 499.5,329.5 500.5,329.5 501.5,328.5 502.5,328.5 503.5,328.5 504.5,327.5 505.5,327.5 506.5,327.5 507.5,327.5 508.5,326.5 509.5,326.5 510.5,326.5 511.5,326.5 512.5,326.5 513.5,326.5 514.5,326.5 515.5,326.5 516.5,325.5 517.5,324.5 518.5,324.5 519.5,324.5 520.5,324.5 521.5,324.5 522.5,324.5 523.5,324.5 524.5,325.5 525.5,325.5 526.5,325.5 527.5,324.5 528.5,324.5 529.5,323.5 530.5,322.5 531.5,322.5 532.5,321.5 533.5,321.5 534.5,321.5 535.5,321.5 536.5,321.5 537.5,321.5 538.5,321.5 539.5,321.5 540.5,321.5 541.5,321.5 542.5,321.5 543.5,321.5 544.5,320.5 545.5,320.5 546.5,320.5 547.5,320.5 548.5,320.5 549.5,320.5 550.5,320.5 551.5,320.5 552.5,320.5 553.5,319.5 554.5,319.5 555.5,319.5 556.5,318.5 557.5,318.5 558.5,318.5 559.5,318.5 560.5,318.5 561.5,318.5 562.5,318.5 563.5,318.5 564.5,318.5 565.5,318.5 566.5,318.5 567.5,318.5 568.5,318.5 569.5,318.5 570.5,318.5 571.5,318.5 572.5,318.5 573.5,318.5 574.5,318.5 575.5,318.5 576.5,318.5 577.5,318.5 578.5,318.5 579.5,318.5 580.5,318.5 581.5,318.5 582.5,318.5 583.5,317.5 584.5,317.5 585.5,317.5 586.5,317.5 587.5,317.5 588.5,317.5 589.5,317.5 590.5,317.5 591.5,317.5 592.5,317.5 593.5,317.5 594.5,317.5 595.5,317.5 596.5,317.5 597.5,317.5 598.5,317.5 599.5,317.5 600.5,317.5 601.5,317.5 602.5,317.5 603.5,317.5 604.5,318.5 605.5,318.5 606.5,318.5 607.5,318.5 608.5,318.5 609.5,318.5 610.5,318.5 611.5,318.5 612.5,318.5 613.5,318.5 614.5,318.5 615.5,318.5 616.5,318.5 617.5,318.5 618.5,318.5 619.5,318.5" fill="none" stroke="#ffff00" stroke-width="1"/>
<rect x="48" y="125" width="1" height="308" fill="#ffff00"/>
</svg>
<div class="xl" style="left:58px">1</div>
<div class="xl" style="left:84px">2</div>
<div class="xl" style="left:110px">3</div>
<div class="xl" style="left:136px">4</div>
<div class="xl" style="left:162px">5</div>
<div class="xl" style="left:188px">6</div>
<div class="xl" style="left:214px">7</div>
<div class="xl" style="left:240px">8</div>
<div class="xl" style="left:266px">9</div>
<div class="xl" style="left:291px">10</div>
<div class="xl" style="left:317px">11</div>
<div class="xl" style="left:343px">12</div>
<div class="xl" style="left:369px">13</div>
<div class="xl" style="left:395px">14</div>
<div class="xl" style="left:421px">15</div>
<div class="xl" style="left:447px">16</div>
<div class="xl" style="left:473px">17</div>
<div class="xl" style="left:499px">18</div>
<div class="xl" style="left:525px">19</div>
<div class="xl" style="left:551px">20</div>
<div class="xl" style="left:577px">21</div>
<div class="xl" style="left:614px;width:30px">kHz</div>
<div class="yl" style="top:92px">- 10</div>
<div class="yl" style="top:129px">- 20</div>
<div class="yl" style="top:166px">- 30</div>
<div class="yl" style="top:203px">- 40</div>
<div class="yl" style="top:240px">- 50</div>
<div class="yl" style="top:277px">- 60</div>
<div class="yl" style="top:314px">- 70</div>
<div class="yl" style="top:351px">- 80</div>
<div class="yl" style="top:388px">- 90</div>
<div class="yl" style="top:58px;left:634px">dB</div>
<div class="leg" style="top:95px">Left Channel</div>
<div class="leg" style="top:111px;letter-spacing:-0.3px">Right Channel</div>
</div></body></html>
